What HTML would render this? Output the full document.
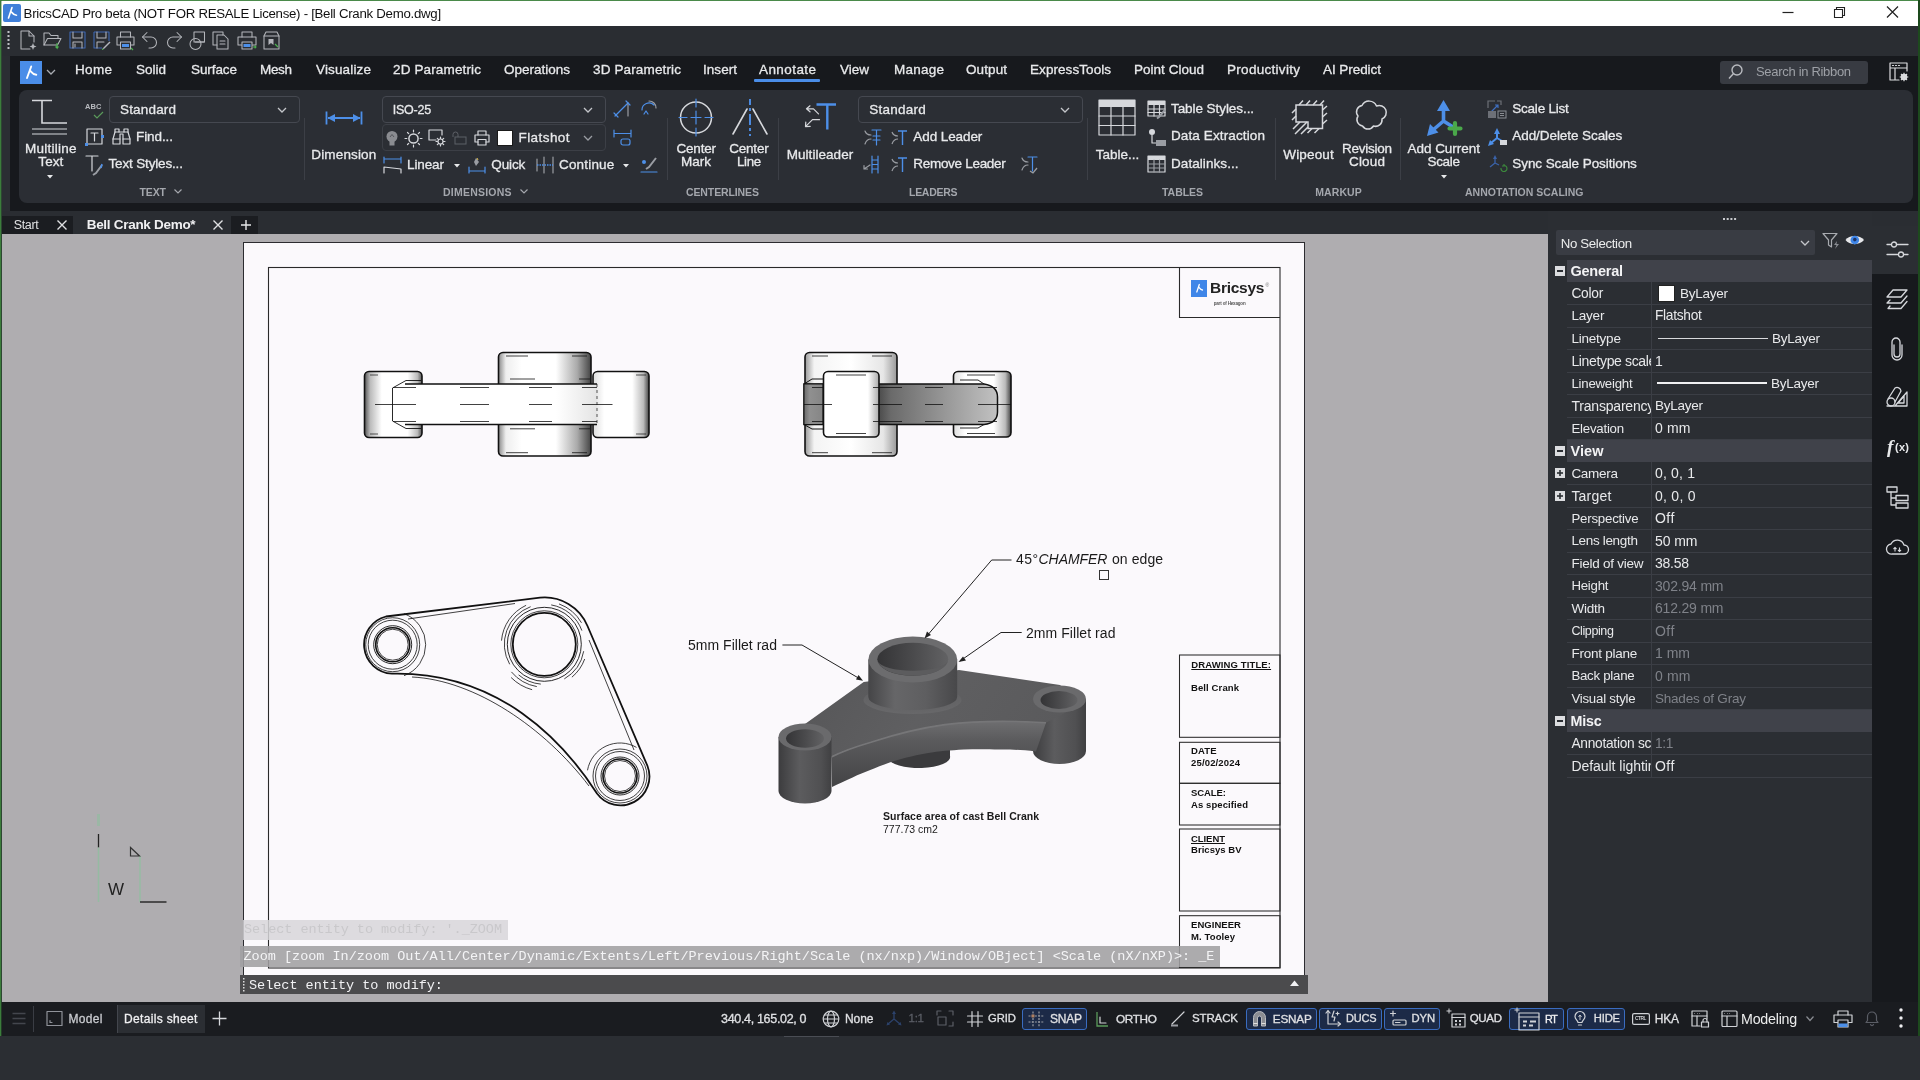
<!DOCTYPE html>
<html lang="en">
<head>
<meta charset="utf-8">
<title>BricsCAD Pro beta (NOT FOR RESALE License) - [Bell Crank Demo.dwg]</title>
<style>
*{box-sizing:border-box;margin:0;padding:0}
html,body{width:1920px;height:1080px;overflow:hidden;background:#2b2e33;font-family:"Liberation Sans",sans-serif;color:#e4e5e7}
.abs,.abs>*{position:absolute}
#root{position:absolute;left:0;top:0;width:1920px;height:1080px;overflow:hidden;background:#2b2e33;will-change:transform;-webkit-font-smoothing:antialiased}
#root div,#root span,#root svg{position:absolute;white-space:nowrap}
.hv{-webkit-text-stroke:0.3px currentColor}
.t{color:#e6e7e9;font-size:14px;line-height:16px;letter-spacing:-0.1px}
svg{overflow:visible}
/* title bar */
#titlebar{left:0;top:0;width:1920px;height:26px;background:#fff}
#title{left:23px;top:5px;font-size:13.3px;line-height:16px;color:#111;letter-spacing:-0.05px}
/* toolbar */
#qat{left:0;top:26px;width:1920px;height:30px;background:#2a2d32}
/* tabs row */
#tabrow{left:10px;top:56px;width:1910px;height:155px;background:#17191d}
.tab{top:61px;font-size:14px;line-height:16px;color:#e1e2e4;letter-spacing:-0.05px}
/* ribbon */
#ribbon{left:19px;top:90px;width:1894px;height:113px;background:#2b2e34;border-radius:8px}
.sep{width:1px;background:#3b3e45;top:121px;height:59px}
.plabel{top:185px;font-size:10.5px;line-height:12px;font-weight:bold;color:#a9acb2;letter-spacing:0.1px}
.dd{border:1px solid #464a52;border-radius:3px;background:#2b2e34}
/* doc tabs */
#doctabs{left:0;top:211px;width:1920px;height:23px;background:#2a2d32}
/* canvas */
#canvas{left:2px;top:234px;width:1546px;height:768px;background:#afadb0;overflow:hidden}
#paper{left:243px;top:242px;width:1062px;height:752px;background:#fbf9fc;border:1.3px solid #2c2c30}
/* props */
#props{left:1548px;top:211px;width:324px;height:791px;background:#2b2e33}
#strip{left:1872px;top:226px;width:48px;height:776px;background:#17191d}
.prow{left:1567px;width:305px;height:22.5px;border-bottom:1px solid #3c3f46}
.pl{font-size:14px;line-height:16px;color:#e6e7e9;letter-spacing:-0.35px}
.pv{font-size:14px;line-height:16px;color:#e6e7e9;letter-spacing:-0.2px}
.dim{color:#7d8087}
/* status */
#status{left:0;top:1002px;width:1920px;height:33.5px;background:#1a1c20}
.st{top:1011px;font-size:12.5px;line-height:15px;color:#dcdde0;letter-spacing:-0.1px}
.tog{top:1006px;height:25px;border:1px solid #3b6fc4;border-radius:3px;background:#1f2a40}

</style>
</head>
<body>
<div id="root">
<div id="titlebar"></div>
<div id="qat"></div>
<div id="tabrow"></div>
<div id="ribbon"></div>
<div id="doctabs"></div>
<div id="canvas"></div>
<div id="paper"></div>
<div id="props"></div>
<div id="strip"></div>
<div id="status"></div>
<div style="left:0px;top:0px;width:1920px;height:1.3px;background:#4a8a4a;"></div>
<svg style="left:3px;top:4px;" width="18" height="18" viewBox="0 0 18 18"><rect x="0" y="0" width="18" height="18" rx="2" fill="#3f7fd9"/><path d="M9 3.500 L5.500 14 M8 7.500 C9.500 9 10.500 11.300 13.500 11.300" stroke="#fff" stroke-width="1.600" fill="none" stroke-linecap="round"/></svg>
<div style="left:23.6px;top:7.4px;font-size:13.25px;line-height:13.25px;color:#111;letter-spacing:-0.28px;">BricsCAD Pro beta (NOT FOR RESALE License) - [Bell Crank Demo.dwg]</div>
<svg style="left:1780px;top:4px;" width="130" height="16" viewBox="0 0 130 16"><path d="M2.5 8.5 H13.5" stroke="#222" stroke-width="1.2"/><path d="M54.5 5.5 h8 v8 h-8 z M56.5 5.5 v-2 h8 v8 h-2" stroke="#222" stroke-width="1.1" fill="none"/><path d="M107 2.5 L118 13.5 M118 2.5 L107 13.5" stroke="#222" stroke-width="1.2"/></svg>
<svg style="left:7px;top:31px;" width="3" height="18" viewBox="0 0 3 18"><rect x="0.5" y="0" width="2" height="2" fill="#bfc1c5"/><rect x="0.5" y="4" width="2" height="2" fill="#bfc1c5"/><rect x="0.5" y="8" width="2" height="2" fill="#bfc1c5"/><rect x="0.5" y="12" width="2" height="2" fill="#bfc1c5"/><rect x="0.5" y="16" width="2" height="2" fill="#bfc1c5"/></svg>
<svg style="left:20px;top:30px;" width="17" height="20" viewBox="0 0 17 20"><path d="M1 1 h8 l5 5 v6 M1 1 v18 h9" stroke="#b4b6bb" stroke-width="1.05" fill="none" stroke-linejoin="round" stroke-linecap="round"/><path d="M9 1 v5 h5" stroke="#b4b6bb" stroke-width="1.05" fill="none" stroke-linejoin="round" stroke-linecap="round"/><path d="M13 13 l1 2.5 l2.5 1 l-2.5 1 l-1 2.5 l-1 -2.5 l-2.5 -1 l2.5 -1 z" fill="#b4b6bb"/></svg>
<svg style="left:43px;top:31px;" width="19" height="19" viewBox="0 0 19 19"><path d="M1 14 v-12 h5 l2 2.5 h7 v3" stroke="#b4b6bb" stroke-width="1.05" fill="none" stroke-linejoin="round" stroke-linecap="round"/><path d="M1 14 l3.5 -6.500 h13.5 l-3.5 6.500 z" stroke="#b4b6bb" stroke-width="1.05" fill="none" stroke-linejoin="round" stroke-linecap="round"/><path d="M14 12 v5 l-1.5 -1.5 M14 17 l1.500 -1.500" stroke="#4caf50" stroke-width="1.2" fill="none"/></svg>
<svg style="left:69px;top:31px;" width="17" height="18" viewBox="0 0 17 18"><path d="M1 1 h15 v16 h-15 z" stroke="#3f68b3" stroke-width="1.1" fill="none" stroke-linejoin="round"/><path d="M4 1 v6 h9 v-6 M4 17 v-6 h9 v6" stroke="#b4b6bb" stroke-width="1.05" fill="none" stroke-linejoin="round" stroke-linecap="round"/><path d="M6 13 v3" stroke="#b4b6bb" stroke-width="1.05" fill="none" stroke-linejoin="round" stroke-linecap="round"/></svg>
<svg style="left:93px;top:31px;" width="18" height="19" viewBox="0 0 18 19"><path d="M1 1 h15 v9 M1 1 v16 h8" stroke="#3f68b3" stroke-width="1.1" fill="none" stroke-linejoin="round"/><path d="M4 1 v6 h9 v-6 M4 17 v-6 h7" stroke="#b4b6bb" stroke-width="1.05" fill="none" stroke-linejoin="round" stroke-linecap="round"/><path d="M16.500 10.500 l-6 6 l-1.500 2 l2.500 -1 l6 -6 z" fill="#b4b6bb"/><path d="M9 18.500 l1.500 -0.500" stroke="#4caf50" stroke-width="1.200"/></svg>
<svg style="left:116px;top:31px;" width="19" height="19" viewBox="0 0 19 19"><path d="M4.500 6 v-5 h10 v5" stroke="#b4b6bb" stroke-width="1.05" fill="none" stroke-linejoin="round" stroke-linecap="round"/><path d="M4 14 h-3 v-8 h17 v8 h-3" stroke="#b4b6bb" stroke-width="1.05" fill="none" stroke-linejoin="round" stroke-linecap="round"/><path d="M4.500 11 h10 v7 h-10 z" stroke="#b4b6bb" stroke-width="1.05" fill="none" stroke-linejoin="round" stroke-linecap="round"/><rect x="6" y="13" width="7" height="3" fill="#4d8fe8"/><path d="M15 17 l2 2" stroke="#4caf50" stroke-width="1.200"/></svg>
<svg style="left:141px;top:31px;" width="18" height="18" viewBox="0 0 18 18"><path d="M6 1.500 L1.500 6 L6 10.500" stroke="#b4b6bb" stroke-width="1.05" fill="none" stroke-linejoin="round" stroke-linecap="round"/><path d="M1.500 6 H10 a5.500 5.500 0 0 1 0 11 H8" stroke="#b4b6bb" stroke-width="1.05" fill="none" stroke-linejoin="round" stroke-linecap="round"/></svg>
<svg style="left:165px;top:31px;" width="18" height="18" viewBox="0 0 18 18"><path d="M12 1.500 L16.500 6 L12 10.500" stroke="#b4b6bb" stroke-width="1.05" fill="none" stroke-linejoin="round" stroke-linecap="round"/><path d="M16.500 6 H8 a5.500 5.500 0 0 0 0 11 H10" stroke="#b4b6bb" stroke-width="1.05" fill="none" stroke-linejoin="round" stroke-linecap="round"/></svg>
<svg style="left:189px;top:31px;" width="17" height="19" viewBox="0 0 17 19"><rect x="5" y="1" width="10.500" height="10" stroke="#b4b6bb" stroke-width="1.05" fill="none" stroke-linejoin="round" stroke-linecap="round"/><circle cx="6.500" cy="13" r="5.500" stroke="#b4b6bb" stroke-width="1.05" fill="none" stroke-linejoin="round" stroke-linecap="round"/><path d="M6.500 11 H15" stroke="#b4b6bb" stroke-width="1.05" fill="none" stroke-linejoin="round" stroke-linecap="round"/></svg>
<svg style="left:212px;top:31px;" width="17" height="19" viewBox="0 0 17 19"><path d="M11 4 v-3 h-10 v13 h4" stroke="#b4b6bb" stroke-width="1.05" fill="none" stroke-linejoin="round" stroke-linecap="round"/><path d="M5 4 h7 l4 4 v10 h-11 z" stroke="#b4b6bb" stroke-width="1.05" fill="none" stroke-linejoin="round" stroke-linecap="round"/><path d="M8 10 h5 M8 13 h5" stroke="#b4b6bb" stroke-width="1.05" fill="none" stroke-linejoin="round" stroke-linecap="round"/></svg>
<svg style="left:237px;top:31px;" width="20" height="19" viewBox="0 0 20 19"><path d="M5 6 v-5 h10 v5" stroke="#b4b6bb" stroke-width="1.05" fill="none" stroke-linejoin="round" stroke-linecap="round"/><path d="M4.500 14 h-3.500 v-8 h18 v8 h-3.500" stroke="#b4b6bb" stroke-width="1.05" fill="none" stroke-linejoin="round" stroke-linecap="round"/><path d="M5 11 h10 v7 h-10 z" stroke="#b4b6bb" stroke-width="1.05" fill="none" stroke-linejoin="round" stroke-linecap="round"/><rect x="6.500" y="13" width="7" height="3" fill="#4d8fe8"/><path d="M16 16 h3 m-1.300 -1.300 l1.300 1.300 l-1.300 1.300" stroke="#4caf50" stroke-width="1.100" fill="none"/></svg>
<svg style="left:263px;top:31px;" width="17" height="19" viewBox="0 0 17 19"><path d="M1 5 l2 -4 h11 l2 4 v13 h-15 z" stroke="#b4b6bb" stroke-width="1.05" fill="none" stroke-linejoin="round" stroke-linecap="round"/><path d="M1 5 h15" stroke="#b4b6bb" stroke-width="1.05" fill="none" stroke-linejoin="round" stroke-linecap="round"/><path d="M5.500 8 h5 v6 l-2.500 -2 l-2.500 2 z" fill="#b4b6bb"/><path d="M12 13 l3 3" stroke="#4caf50" stroke-width="1.200"/></svg>
<div style="left:20px;top:61px;width:22px;height:23px;background:#4a8de8;"></div>
<svg style="left:20px;top:61px;" width="22" height="23" viewBox="0 0 22 23"><path d="M11.200 5.500 L7 17 M10 9.500 C11.500 11 13 13.800 16.300 13.800" stroke="#fff" stroke-width="1.900" fill="none" stroke-linecap="round"/></svg>
<svg style="left:46px;top:69px;" width="10" height="7" viewBox="0 0 10 7"><path d="M1 1 L5 5 L9 1" stroke="#a9acb2" stroke-width="1.300" fill="none"/></svg>
<div class="hv" style="left:75.0px;top:62.9px;font-size:13.5px;line-height:13.5px;color:#e8e9eb;letter-spacing:0.33px;">Home</div>
<div class="hv" style="left:136.0px;top:62.9px;font-size:13.5px;line-height:13.5px;color:#e8e9eb;letter-spacing:-0.01px;">Solid</div>
<div class="hv" style="left:191.0px;top:62.9px;font-size:13.5px;line-height:13.5px;color:#e8e9eb;letter-spacing:-0.09px;">Surface</div>
<div class="hv" style="left:260.0px;top:62.9px;font-size:13.5px;line-height:13.5px;color:#e8e9eb;letter-spacing:-0.34px;">Mesh</div>
<div class="hv" style="left:316.0px;top:62.9px;font-size:13.5px;line-height:13.5px;color:#e8e9eb;letter-spacing:0.15px;">Visualize</div>
<div class="hv" style="left:393.0px;top:62.9px;font-size:13.5px;line-height:13.5px;color:#e8e9eb;letter-spacing:0.14px;">2D Parametric</div>
<div class="hv" style="left:504.0px;top:62.9px;font-size:13.5px;line-height:13.5px;color:#e8e9eb;">Operations</div>
<div class="hv" style="left:593.0px;top:62.9px;font-size:13.5px;line-height:13.5px;color:#e8e9eb;letter-spacing:0.14px;">3D Parametric</div>
<div class="hv" style="left:703.0px;top:62.9px;font-size:13.5px;line-height:13.5px;color:#e8e9eb;letter-spacing:0.05px;">Insert</div>
<div class="hv" style="left:759.0px;top:62.9px;font-size:13.5px;line-height:13.5px;color:#e8e9eb;letter-spacing:0.42px;">Annotate</div>
<div class="hv" style="left:840.0px;top:62.9px;font-size:13.5px;line-height:13.5px;color:#e8e9eb;letter-spacing:-0.01px;">View</div>
<div class="hv" style="left:894.0px;top:62.9px;font-size:13.5px;line-height:13.5px;color:#e8e9eb;letter-spacing:0.24px;">Manage</div>
<div class="hv" style="left:966.0px;top:62.9px;font-size:13.5px;line-height:13.5px;color:#e8e9eb;letter-spacing:0.10px;">Output</div>
<div class="hv" style="left:1030.0px;top:62.9px;font-size:13.5px;line-height:13.5px;color:#e8e9eb;letter-spacing:0.07px;">ExpressTools</div>
<div class="hv" style="left:1134.0px;top:62.9px;font-size:13.5px;line-height:13.5px;color:#e8e9eb;letter-spacing:0.02px;">Point Cloud</div>
<div class="hv" style="left:1227.0px;top:62.9px;font-size:13.5px;line-height:13.5px;color:#e8e9eb;letter-spacing:0.29px;">Productivity</div>
<div class="hv" style="left:1323.0px;top:62.9px;font-size:13.5px;line-height:13.5px;color:#e8e9eb;letter-spacing:-0.06px;">AI Predict</div>
<div style="left:754px;top:79px;width:66px;height:3px;background:#4a8de8;border-radius:1px;"></div>
<div style="left:1720px;top:61px;width:148px;height:23px;background:#383b42;border-radius:3px;"></div>
<svg style="left:1727px;top:63px;" width="17" height="18" viewBox="0 0 17 18"><circle cx="10" cy="7" r="5" stroke="#b9bbc0" stroke-width="1.400" fill="none"/><path d="M6.500 10.500 L2 15.500" stroke="#b9bbc0" stroke-width="1.400"/></svg>
<div style="left:1756.0px;top:64.6px;font-size:13px;line-height:13px;color:#9da0a6;letter-spacing:-0.31px;">Search in Ribbon</div>
<svg style="left:1889px;top:62px;" width="20" height="20" viewBox="0 0 20 20"><path d="M1 1 h17 v8 M1 1 v17 h9 M1 6 h17 M6 6 v12" stroke="#dcdde0" stroke-width="1.200" fill="none" stroke-linejoin="round" stroke-linecap="round"/><path d="M3.500 3.500 h1 M6.500 3.500 h1 M9.500 3.500 h1" stroke="#dcdde0" stroke-width="1.200" fill="none" stroke-linejoin="round" stroke-linecap="round"/><circle cx="15" cy="15" r="2.300" stroke="#dcdde0" stroke-width="2" fill="none"/><path d="M15 10.700 v8.600 M10.700 15 h8.600 M12 12 l6 6 M18 12 l-6 6" stroke="#dcdde0" stroke-width="1.200"/></svg>
<div style="left:2px;top:216px;width:71px;height:18px;background:#1b1d21;"></div>
<div style="left:13.7px;top:218.5px;font-size:12.5px;line-height:12.5px;color:#e0e1e3;letter-spacing:-0.35px;">Start</div>
<svg style="left:56px;top:219px;" width="12" height="12" viewBox="0 0 12 12"><path d="M1.500 1.500 L10.500 10.500 M10.500 1.500 L1.500 10.500" stroke="#e0e1e3" stroke-width="1.400"/></svg>
<div style="left:86.7px;top:218.0px;font-size:13.5px;line-height:13.5px;color:#f0f0f2;letter-spacing:-0.29px;font-weight:bold;">Bell Crank Demo*</div>
<svg style="left:211.5px;top:219px;" width="12" height="12" viewBox="0 0 12 12"><path d="M1.500 1.500 L10.500 10.500 M10.500 1.500 L1.500 10.500" stroke="#e0e1e3" stroke-width="1.400"/></svg>
<div style="left:231px;top:216px;width:27px;height:18px;background:#1b1d21;"></div>
<svg style="left:240px;top:219px;" width="12" height="12" viewBox="0 0 12 12"><path d="M6 1 V11 M1 6 H11" stroke="#e6e7e9" stroke-width="1.400"/></svg>
<svg style="left:31px;top:99px;" width="38" height="37" viewBox="0 0 38 37"><path d="M1 1.500 H21 M11 1.500 V24 H36" stroke="#d6d8dc" stroke-width="1.600" fill="none"/><path d="M1 30 H36 M1 35 H36" stroke="#d6d8dc" stroke-width="1.200"/></svg>
<div class="hv" style="left:25.0px;top:142.4px;font-size:13.5px;line-height:13.5px;color:#e8e9eb;letter-spacing:0.25px;">Multiline</div>
<div class="hv" style="left:38.3px;top:154.7px;font-size:13.5px;line-height:13.5px;color:#e8e9eb;letter-spacing:0.08px;">Text</div>
<svg style="left:47px;top:174.5px;" width="6" height="4" viewBox="0 0 6 4"><path d="M0 0 H6 L3 3.500 Z" fill="#e8e9eb"/></svg>
<div style="left:85.0px;top:103.3px;font-size:7.5px;line-height:7.5px;color:#b8babf;letter-spacing:0.13px;font-weight:bold;">ABC</div>
<svg style="left:93px;top:111px;" width="11" height="8" viewBox="0 0 11 8"><path d="M1 4 L4 7 L10 1" stroke="#5a9a5a" stroke-width="1.200" fill="none"/></svg>
<div style="left:109px;top:96px;width:191px;height:27px;border:1px solid #454850;border-radius:4px;"></div>
<div class="hv" style="left:120.0px;top:103.2px;font-size:13.5px;line-height:13.5px;color:#e8e9eb;letter-spacing:0.17px;">Standard</div>
<svg style="left:277px;top:106.5px;" width="10" height="7" viewBox="0 0 10 7"><path d="M1 1 L5 5 L9 1" stroke="#c4c6ca" stroke-width="1.300" fill="none"/></svg>
<svg style="left:85px;top:128px;" width="20" height="19" viewBox="0 0 20 19"><rect x="2" y="1" width="15" height="15" stroke="#d6d8dc" stroke-width="1.2" fill="none" stroke-linejoin="round" stroke-linecap="round"/><path d="M6 5 H13 M9.500 5 V13" stroke="#d6d8dc" stroke-width="1.2" fill="none" stroke-linejoin="round" stroke-linecap="round"/><rect x="0" y="15" width="3" height="3" fill="#4d8fe8"/><rect x="16" y="7" width="3" height="3" fill="#4d8fe8"/></svg>
<svg style="left:112px;top:128px;" width="20" height="18" viewBox="0 0 20 18"><path d="M3 4 V1 H7 V4 M12 4 V1 H16 V4" stroke="#d6d8dc" stroke-width="1.2" fill="none" stroke-linejoin="round" stroke-linecap="round"/><path d="M3 4 L1 11 V16 H8 V6 H11 V16 H18 V11 L16 4 Z" stroke="#d6d8dc" stroke-width="1.2" fill="none" stroke-linejoin="round" stroke-linecap="round"/><path d="M1 11 H8 M11 11 H18" stroke="#d6d8dc" stroke-width="1.2" fill="none" stroke-linejoin="round" stroke-linecap="round"/></svg>
<div class="hv" style="left:136.0px;top:130.4px;font-size:13.5px;line-height:13.5px;color:#e8e9eb;letter-spacing:-0.09px;">Find...</div>
<svg style="left:85px;top:155px;" width="20" height="22" viewBox="0 0 20 22"><path d="M1 1 H13 M7 1 V16" stroke="#d6d8dc" stroke-width="1.2" fill="none" stroke-linejoin="round" stroke-linecap="round"/><path d="M17 10 L11 18 L8 20" stroke="#9a9da3" stroke-width="2" fill="none"/><path d="M17 9 L16 13" stroke="#4d8fe8" stroke-width="1.500"/></svg>
<div class="hv" style="left:108.5px;top:157.4px;font-size:13.5px;line-height:13.5px;color:#e8e9eb;letter-spacing:-0.16px;">Text Styles...</div>
<div style="left:139.5px;top:187.1px;font-size:10.5px;line-height:10.5px;color:#a4a7ad;letter-spacing:-0.11px;font-weight:bold;">TEXT</div>
<svg style="left:174.0px;top:189px;" width="8" height="6" viewBox="0 0 8 6"><path d="M0.500 0.500 L4 4 L7.500 0.500" stroke="#a4a7ad" stroke-width="1.200" fill="none"/></svg>
<div style="left:304px;top:118px;width:1px;height:62px;background:#3c3f46;"></div>
<svg style="left:325px;top:111px;" width="38" height="14" viewBox="0 0 38 14"><path d="M1.500 0.500 V13.500 M36.500 0.500 V13.500 M3 7 H35" stroke="#4d8fe8" stroke-width="1.800" fill="none"/><path d="M2.500 7 L10 3 V11 Z M35.500 7 L28 3 V11 Z" fill="#4d8fe8"/></svg>
<div class="hv" style="left:311.3px;top:148.4px;font-size:13.5px;line-height:13.5px;color:#e8e9eb;letter-spacing:0.15px;">Dimension</div>
<div style="left:382px;top:96px;width:224px;height:27px;border:1px solid #454850;border-radius:4px;"></div>
<div class="hv" style="left:392.7px;top:103.7px;font-size:12.5px;line-height:12.5px;color:#e8e9eb;letter-spacing:-0.22px;">ISO-25</div>
<svg style="left:583px;top:106.5px;" width="10" height="7" viewBox="0 0 10 7"><path d="M1 1 L5 5 L9 1" stroke="#c4c6ca" stroke-width="1.300" fill="none"/></svg>
<div style="left:382px;top:124px;width:224px;height:27px;border:1px solid #3c3f46;border-radius:4px;"></div>
<svg style="left:385px;top:130px;" width="14" height="17" viewBox="0 0 14 17"><circle cx="7" cy="6.500" r="5.500" fill="#8a8c91"/><rect x="4.500" y="11" width="5" height="4.500" fill="#8a8c91"/><path d="M5 7 L7 4.500 L9 7" stroke="#55575c" fill="none"/></svg>
<svg style="left:404px;top:129px;" width="19" height="19" viewBox="0 0 19 19"><circle cx="9.500" cy="9.500" r="4.600" stroke="#d6d8dc" stroke-width="1.500" fill="none"/><path d="M9.500 1 V2.800 M9.500 16.200 V18 M1 9.500 H2.800 M16.200 9.500 H18 M3.500 3.500 L4.700 4.700 M14.300 14.300 L15.500 15.500 M3.500 15.500 L4.700 14.300 M14.300 4.700 L15.500 3.500" stroke="#d6d8dc" stroke-width="1.2" fill="none" stroke-linejoin="round" stroke-linecap="round"/></svg>
<svg style="left:428px;top:129px;" width="18" height="18" viewBox="0 0 18 18"><path d="M8 11 H1 V1 H14 V6" stroke="#d6d8dc" stroke-width="1.2" fill="none" stroke-linejoin="round" stroke-linecap="round"/><circle cx="12.500" cy="12.500" r="2.500" stroke="#d6d8dc" stroke-width="1.2" fill="none" stroke-linejoin="round" stroke-linecap="round"/><path d="M12.500 8 V9.500 M12.500 15.500 V17 M8 12.500 H9.500 M15.500 12.500 H17 M9.300 9.300 L10.400 10.400 M14.600 14.600 L15.700 15.700 M9.300 15.700 L10.400 14.600 M14.600 10.400 L15.700 9.300" stroke="#d6d8dc" stroke-width="1.2" fill="none" stroke-linejoin="round" stroke-linecap="round"/></svg>
<svg style="left:451px;top:131px;" width="16" height="14" viewBox="0 0 16 14"><rect x="4" y="6" width="11" height="7" stroke="#5d6067" fill="none"/><path d="M2 6 V3.500 A2.500 2.500 0 0 1 7 3.500 V6" stroke="#5d6067" fill="none"/></svg>
<svg style="left:474px;top:130px;" width="16" height="16" viewBox="0 0 16 16"><path d="M4 5 V1 H12 V5" stroke="#d6d8dc" stroke-width="1.2" fill="none" stroke-linejoin="round" stroke-linecap="round"/><path d="M4 12 H1 V5 H15 V12 H12" stroke="#d6d8dc" stroke-width="1.2" fill="none" stroke-linejoin="round" stroke-linecap="round"/><path d="M4 9.500 H12 V15 H4 Z" stroke="#d6d8dc" stroke-width="1.2" fill="none" stroke-linejoin="round" stroke-linecap="round"/></svg>
<div style="left:497px;top:130px;width:16px;height:16px;background:#ffffff;border:1px solid #1a1a1a;"></div>
<div class="hv" style="left:518.5px;top:131.2px;font-size:13.5px;line-height:13.5px;color:#e8e9eb;letter-spacing:0.43px;">Flatshot</div>
<svg style="left:583px;top:135px;" width="10" height="7" viewBox="0 0 10 7"><path d="M1 1 L5 5 L9 1" stroke="#9a9da3" stroke-width="1.300" fill="none"/></svg>
<svg style="left:613px;top:100px;" width="19" height="19" viewBox="0 0 19 19"><path d="M2 16 L15 3" stroke="#4d8fe8" stroke-width="1.2" fill="none" stroke-linejoin="round" stroke-linecap="round"/><path d="M15 3 V16" stroke="#9a9da3" stroke-width="1.2" fill="none" stroke-linejoin="round" stroke-linecap="round"/><path d="M1 13 L5 17 M13 1 L17 5" stroke="#4d8fe8" stroke-width="1.2" fill="none" stroke-linejoin="round" stroke-linecap="round"/></svg>
<svg style="left:613px;top:129px;" width="19" height="18" viewBox="0 0 19 18"><path d="M1 1 V8 M18 1 V8 M1 4.500 H18" stroke="#4d8fe8" stroke-width="1.2" fill="none" stroke-linejoin="round" stroke-linecap="round"/><rect x="8" y="10" width="9" height="6" rx="2" stroke="#4d8fe8" stroke-width="1.2" fill="none" stroke-linejoin="round" stroke-linecap="round"/></svg>
<svg style="left:640px;top:100px;" width="18" height="19" viewBox="0 0 18 19"><path d="M2 10 A7 7 0 0 1 14 5" stroke="#4d8fe8" stroke-width="1.2" fill="none" stroke-linejoin="round" stroke-linecap="round"/><path d="M9 1 C13 1 16 4 16 8" stroke="#9a9da3" stroke-width="1.2" fill="none" stroke-linejoin="round" stroke-linecap="round"/><path d="M4 14 l2 -3 l2 3" stroke="#4d8fe8" stroke-width="1.2" fill="none" stroke-linejoin="round" stroke-linecap="round"/></svg>
<svg style="left:640px;top:156px;" width="18" height="18" viewBox="0 0 18 18"><path d="M1 16 H17" stroke="#4d8fe8" stroke-width="1.2" fill="none" stroke-linejoin="round" stroke-linecap="round"/><path d="M16 2 L9 11 L6 13" stroke="#9a9da3" stroke-width="2" fill="none"/><circle cx="4" cy="6" r="2" fill="#4d8fe8"/></svg>
<svg style="left:383px;top:156px;" width="20" height="18" viewBox="0 0 20 18"><path d="M1 1 V7 M18 1 V7 M1 3 H18" stroke="#4d8fe8" stroke-width="1.2" fill="none" stroke-linejoin="round" stroke-linecap="round"/><path d="M1 17 V11 L18 13 V17" stroke="#d6d8dc" stroke-width="1.2" fill="none" stroke-linejoin="round" stroke-linecap="round"/></svg>
<div class="hv" style="left:407.0px;top:158.4px;font-size:13.5px;line-height:13.5px;color:#e8e9eb;letter-spacing:-0.11px;">Linear</div>
<svg style="left:453.5px;top:164.0px;" width="6" height="4" viewBox="0 0 6 4"><path d="M0 0 H6 L3 3.500 Z" fill="#e8e9eb"/></svg>
<svg style="left:468px;top:157px;" width="19" height="17" viewBox="0 0 19 17"><path d="M1 10 V16 M17 10 V16 M1 14 H17" stroke="#4d8fe8" stroke-width="1.2" fill="none" stroke-linejoin="round" stroke-linecap="round"/><path d="M8 1 L11 5 L8 9 L6 5 Z" fill="#9a9da3"/><path d="M9 1 l1 2" stroke="#e0c050"/></svg>
<div class="hv" style="left:491.3px;top:158.4px;font-size:13.5px;line-height:13.5px;color:#e8e9eb;letter-spacing:-0.13px;">Quick</div>
<svg style="left:536px;top:156px;" width="18" height="18" viewBox="0 0 18 18"><path d="M1 3 V15 M8 1 V17 M17 1 V17" stroke="#9a9da3" stroke-width="1.2" fill="none" stroke-linejoin="round" stroke-linecap="round"/><path d="M1 9 H17" stroke="#4d8fe8" stroke-width="1.400" stroke-dasharray="1.500 1"/></svg>
<div class="hv" style="left:559.0px;top:158.4px;font-size:13.5px;line-height:13.5px;color:#e8e9eb;letter-spacing:0.18px;">Continue</div>
<svg style="left:623px;top:164.0px;" width="6" height="4" viewBox="0 0 6 4"><path d="M0 0 H6 L3 3.500 Z" fill="#e8e9eb"/></svg>
<div style="left:443.0px;top:187.1px;font-size:10.5px;line-height:10.5px;color:#a4a7ad;letter-spacing:0.22px;font-weight:bold;">DIMENSIONS</div>
<svg style="left:519.5px;top:189px;" width="8" height="6" viewBox="0 0 8 6"><path d="M0.500 0.500 L4 4 L7.500 0.500" stroke="#a4a7ad" stroke-width="1.200" fill="none"/></svg>
<div style="left:667px;top:118px;width:1px;height:62px;background:#3c3f46;"></div>
<svg style="left:678px;top:99px;" width="36" height="37" viewBox="0 0 36 37"><circle cx="18" cy="18.500" r="15.500" stroke="#d6d8dc" stroke-width="1.500" fill="none"/><path d="M18 0 V8 M18 12 V25 M18 29 V37 M1 18.500 H9 M13 18.500 H23 M27 18.500 H35" stroke="#4d8fe8" stroke-width="1.2" fill="none" stroke-linejoin="round" stroke-linecap="round"/></svg>
<div class="hv" style="left:676.5px;top:142.4px;font-size:13.5px;line-height:13.5px;color:#e8e9eb;letter-spacing:-0.20px;">Center</div>
<div class="hv" style="left:681.0px;top:154.7px;font-size:13.5px;line-height:13.5px;color:#e8e9eb;">Mark</div>
<svg style="left:731px;top:99px;" width="38" height="37" viewBox="0 0 38 37"><path d="M16 10 L2 35 M22 10 L36 35" stroke="#d6d8dc" stroke-width="1.600" fill="none" stroke-linecap="round"/><path d="M19 0 V6 M19 9 V12 M19 15 V26 M19 29 V32 M19 35 V37" stroke="#4d8fe8" stroke-width="1.900" fill="none"/></svg>
<div class="hv" style="left:729.2px;top:142.4px;font-size:13.5px;line-height:13.5px;color:#e8e9eb;letter-spacing:-0.20px;">Center</div>
<div class="hv" style="left:737.0px;top:154.8px;font-size:13.25px;line-height:13.25px;color:#e8e9eb;letter-spacing:-0.32px;">Line</div>
<div style="left:686.0px;top:187.1px;font-size:10.5px;line-height:10.5px;color:#a4a7ad;letter-spacing:-0.11px;font-weight:bold;">CENTERLINES</div>
<div style="left:778px;top:118px;width:1px;height:62px;background:#3c3f46;"></div>
<svg style="left:804px;top:103px;" width="33" height="28" viewBox="0 0 33 28"><path d="M12.500 1.500 H32 M23.300 1.500 V26.500" stroke="#4d8fe8" stroke-width="2.400" fill="none"/><path d="M14.500 10.800 L9.500 5.800 H3 M6 2.800 L2.500 5.800 L6 8.800" stroke="#d6d8dc" stroke-width="1.2" fill="none" stroke-linejoin="round" stroke-linecap="round"/><path d="M15.500 16.700 H8.500 L2 23.200 M1.800 19 L1.500 23.600 L6.200 23.400" stroke="#d6d8dc" stroke-width="1.2" fill="none" stroke-linejoin="round" stroke-linecap="round"/></svg>
<div class="hv" style="left:786.7px;top:148.4px;font-size:13.5px;line-height:13.5px;color:#e8e9eb;letter-spacing:0.05px;">Multileader</div>
<div style="left:858px;top:96px;width:225px;height:27px;border:1px solid #454850;border-radius:4px;"></div>
<div class="hv" style="left:869.3px;top:103.2px;font-size:13.5px;line-height:13.5px;color:#e8e9eb;letter-spacing:0.24px;">Standard</div>
<svg style="left:1060px;top:106.5px;" width="10" height="7" viewBox="0 0 10 7"><path d="M1 1 L5 5 L9 1" stroke="#c4c6ca" stroke-width="1.300" fill="none"/></svg>
<svg style="left:863px;top:128px;" width="19" height="19" viewBox="0 0 19 19"><path d="M9 2 H18 M13.500 2 V17 M10 8 H17 M10 12 H17" stroke="#4d8fe8" stroke-width="1.2" fill="none" stroke-linejoin="round" stroke-linecap="round"/><path d="M8 7 C5 7 3 6 2 3 M8 11 C5 11 3 13 2 16" stroke="#9a9da3" stroke-width="1.2" fill="none" stroke-linejoin="round" stroke-linecap="round"/></svg>
<svg style="left:890px;top:129px;" width="18" height="18" viewBox="0 0 18 18"><path d="M8 2 H17 M12.500 2 V16" stroke="#4d8fe8" stroke-width="1.400" fill="none"/><path d="M8 7 C5 7 3 6 2 3 M8 10 C5 10 3 12 2 15" stroke="#9a9da3" stroke-width="1.200" fill="none"/></svg>
<div class="hv" style="left:913.3px;top:130.4px;font-size:13.5px;line-height:13.5px;color:#e8e9eb;letter-spacing:-0.09px;">Add Leader</div>
<svg style="left:863px;top:155px;" width="19" height="19" viewBox="0 0 19 19"><path d="M9 1 V18 M15 1 V18 M9 5 H15 M9 9.500 H15 M9 14 H15" stroke="#4d8fe8" stroke-width="1.2" fill="none" stroke-linejoin="round" stroke-linecap="round"/><path d="M7 10 L1 14 M1 10.500 V14 H4.500" stroke="#9a9da3" stroke-width="1.2" fill="none" stroke-linejoin="round" stroke-linecap="round"/></svg>
<svg style="left:890px;top:156px;" width="18" height="18" viewBox="0 0 18 18"><path d="M8 2 H17 M12.500 2 V16" stroke="#4d8fe8" stroke-width="1.400" fill="none"/><path d="M8 7 C5 7 3 6 2 3 M8 10 C5 10 3 12 2 15" stroke="#9a9da3" stroke-width="1.200" fill="none"/></svg>
<div class="hv" style="left:913.3px;top:157.4px;font-size:13.5px;line-height:13.5px;color:#e8e9eb;letter-spacing:-0.30px;">Remove Leader</div>
<svg style="left:1020px;top:155px;" width="18" height="19" viewBox="0 0 18 19"><path d="M8 2 H17 M12.500 2 V16" stroke="#4d8fe8" stroke-width="1.2" fill="none" stroke-linejoin="round" stroke-linecap="round"/><path d="M8 7 C5 7 3 6 2 3 M8 10 C5 10 3 12 2 15" stroke="#9a9da3" stroke-width="1.2" fill="none" stroke-linejoin="round" stroke-linecap="round"/><path d="M10 16 l3 2 l4 -5" stroke="#9a9da3" stroke-width="1.300" fill="none"/></svg>
<div style="left:909.0px;top:187.1px;font-size:10.5px;line-height:10.5px;color:#a4a7ad;letter-spacing:-0.28px;font-weight:bold;">LEADERS</div>
<div style="left:1087px;top:118px;width:1px;height:62px;background:#3c3f46;"></div>
<svg style="left:1098px;top:99px;" width="38" height="37" viewBox="0 0 38 37"><rect x="1" y="1" width="36" height="35" stroke="#d6d8dc" stroke-width="1.2" fill="none" stroke-linejoin="round" stroke-linecap="round"/><rect x="1" y="1" width="36" height="7" fill="#d6d8dc"/><path d="M1 17 H37 M1 26.500 H37 M13 8 V36 M25 8 V36" stroke="#d6d8dc" stroke-width="1.2" fill="none" stroke-linejoin="round" stroke-linecap="round"/></svg>
<div class="hv" style="left:1095.7px;top:148.4px;font-size:13.5px;line-height:13.5px;color:#e8e9eb;">Table...</div>
<svg style="left:1147px;top:100px;" width="20" height="19" viewBox="0 0 20 19"><rect x="1" y="1" width="17" height="15" stroke="#d6d8dc" stroke-width="1.2" fill="none" stroke-linejoin="round" stroke-linecap="round"/><rect x="1" y="1" width="17" height="4" fill="#d6d8dc"/><path d="M1 9 H18 M1 12.500 H18 M7 5 V16 M12.500 5 V16" stroke="#d6d8dc" stroke-width="1.2" fill="none" stroke-linejoin="round" stroke-linecap="round"/><path d="M18 10 L12 17 L10 18.500" stroke="#9a9da3" stroke-width="2" fill="none"/></svg>
<div class="hv" style="left:1171.0px;top:102.4px;font-size:13.5px;line-height:13.5px;color:#e8e9eb;letter-spacing:-0.07px;">Table Styles...</div>
<svg style="left:1147px;top:128px;" width="20" height="19" viewBox="0 0 20 19"><circle cx="5" cy="4" r="3" fill="#d6d8dc"/><path d="M5 7 V15 H9" stroke="#d6d8dc" stroke-width="1.2" fill="none" stroke-linejoin="round" stroke-linecap="round"/><rect x="9" y="12" width="10" height="6" fill="#9a9da3"/></svg>
<div class="hv" style="left:1171.0px;top:129.4px;font-size:13.5px;line-height:13.5px;color:#e8e9eb;letter-spacing:0.12px;">Data Extraction</div>
<svg style="left:1147px;top:155px;" width="20" height="19" viewBox="0 0 20 19"><rect x="1" y="1" width="17" height="16" stroke="#d6d8dc" stroke-width="1.2" fill="none" stroke-linejoin="round" stroke-linecap="round"/><rect x="1" y="1" width="17" height="4" fill="#d6d8dc"/><path d="M1 9 H18 M1 13 H18 M7 5 V17 M12.500 5 V17" stroke="#9a9da3" stroke-width="1.2" fill="none" stroke-linejoin="round" stroke-linecap="round"/></svg>
<div class="hv" style="left:1171.0px;top:156.9px;font-size:13.5px;line-height:13.5px;color:#e8e9eb;letter-spacing:0.07px;">Datalinks...</div>
<div style="left:1162.0px;top:187.1px;font-size:10.5px;line-height:10.5px;color:#a4a7ad;letter-spacing:-0.04px;font-weight:bold;">TABLES</div>
<div style="left:1275px;top:118px;width:1px;height:62px;background:#3c3f46;"></div>
<svg style="left:1291px;top:99px;" width="38" height="37" viewBox="0 0 38 37"><path d="M5 6 V23 H17 V29.500 H31.500 V6 Z" stroke="#d6d8dc" stroke-width="1.500" fill="none"/><path d="M8 6 l4 -4.500 M15 6 l4 -4.500 M22 6 l4 -4.500 M29 6 l4 -4.500 M31.500 11 l4.500 -4 M31.500 18 l4.500 -4 M31.500 25 l4.500 -4 M5 10 l-4 4 M5 17 l-4 4 M2 30 l7 -7 M4 35 l12 -12 M10 35 l7 -7 M21 29.500 l-4.500 4.500 M28 29.500 l-4.500 4.500" stroke="#d6d8dc" stroke-width="1.500" fill="none"/></svg>
<div class="hv" style="left:1283.3px;top:148.4px;font-size:13.5px;line-height:13.5px;color:#e8e9eb;letter-spacing:0.16px;">Wipeout</div>
<svg style="left:1349px;top:100px;" width="38" height="32" viewBox="0 0 38 32"><path d="M9 16 A6.500 6.500 0 0 1 13 5.500 A8 8 0 0 1 27.500 6 A7 7 0 0 1 33 19 A6.500 6.500 0 0 1 24.500 26 A6.500 6.500 0 0 1 13.500 26 A6.500 6.500 0 0 1 9 16 Z" stroke="#d6d8dc" stroke-width="1.500" fill="none" stroke-linejoin="round"/></svg>
<div class="hv" style="left:1342.0px;top:142.4px;font-size:13.5px;line-height:13.5px;color:#e8e9eb;letter-spacing:-0.25px;">Revision</div>
<div class="hv" style="left:1349.0px;top:154.7px;font-size:13.5px;line-height:13.5px;color:#e8e9eb;letter-spacing:0.18px;">Cloud</div>
<div style="left:1315.3px;top:187.1px;font-size:10.5px;line-height:10.5px;color:#a4a7ad;letter-spacing:0.08px;font-weight:bold;">MARKUP</div>
<div style="left:1400px;top:118px;width:1px;height:62px;background:#3c3f46;"></div>
<svg style="left:1426px;top:100px;" width="38" height="38" viewBox="0 0 38 38"><path d="M17.500 21 V9 M17.500 21 L7 30 M17.500 21 L27 27" stroke="#4d8fe8" stroke-width="3.600" fill="none"/><path d="M17.500 0 L24 11 H11 Z M1 36 L4 24 L12.500 32.500 Z" fill="#4d8fe8"/><path d="M29 23 V34 M23.500 28.500 H34.500" stroke="#4aa84a" stroke-width="4.200" stroke-linecap="round"/></svg>
<div class="hv" style="left:1407.6px;top:142.4px;font-size:13.5px;line-height:13.5px;color:#e8e9eb;letter-spacing:-0.05px;">Add Current</div>
<div class="hv" style="left:1427.5px;top:154.7px;font-size:13.5px;line-height:13.5px;color:#e8e9eb;letter-spacing:-0.32px;">Scale</div>
<svg style="left:1440.5px;top:174.5px;" width="6" height="4" viewBox="0 0 6 4"><path d="M0 0 H6 L3 3.500 Z" fill="#e8e9eb"/></svg>
<svg style="left:1487px;top:100px;" width="21" height="19" viewBox="0 0 21 19"><path d="M1 8 V1 H8 M10 1 H14 V5" stroke="#6d7077" stroke-width="1.200" fill="none"/><path d="M4 12 L11 5 M8 5 H11 V8" stroke="#3f6fbf" stroke-width="1.200" fill="none"/><rect x="1" y="11" width="8" height="7" fill="#6d7077"/><rect x="11" y="11" width="8" height="7" stroke="#8a8d93" fill="none"/><path d="M13 13.500 H17 M13 15.500 H17" stroke="#8a8d93"/></svg>
<div class="hv" style="left:1512.3px;top:102.4px;font-size:13.5px;line-height:13.5px;color:#e8e9eb;letter-spacing:-0.23px;">Scale List</div>
<svg style="left:1488px;top:128px;" width="20" height="19" viewBox="0 0 20 19"><path d="M9 10 V5 M9 10 L3 15 M9 10 L14 13" stroke="#4d8fe8" stroke-width="2" fill="none"/><path d="M9 0 L12 6 H6 Z M0 18 L2 12 L6 16 Z" fill="#4d8fe8"/><rect x="12" y="12" width="7" height="5" fill="#d6d8dc"/></svg>
<div class="hv" style="left:1512.3px;top:129.4px;font-size:13.5px;line-height:13.5px;color:#e8e9eb;letter-spacing:-0.07px;">Add/Delete Scales</div>
<svg style="left:1488px;top:155px;" width="20" height="19" viewBox="0 0 20 19"><path d="M7 8 V3 M7 8 L2 12 M7 8 L11 10" stroke="#3a62a8" stroke-width="1.300" fill="none"/><path d="M7 0 L9 4 H5 Z" fill="#3a62a8"/><path d="M13 13 a3 3 0 1 0 3 -2.500 M16 9 v2 h-2" stroke="#3c8a3c" stroke-width="1.200" fill="none"/></svg>
<div class="hv" style="left:1512.3px;top:156.9px;font-size:13.5px;line-height:13.5px;color:#e8e9eb;letter-spacing:-0.08px;">Sync Scale Positions</div>
<div style="left:1465.0px;top:187.1px;font-size:10.5px;line-height:10.5px;color:#a4a7ad;letter-spacing:-0.01px;font-weight:bold;">ANNOTATION SCALING</div>
<svg style="left:0;top:0" width="1920" height="1080" viewBox="0 0 1920 1080"><rect x="268.500" y="267.500" width="1011.500" height="700.500" fill="none" stroke="#2a2a2a" stroke-width="1.100"/><path d="M1179.500 267.500 V317.500 H1280" fill="none" stroke="#2a2a2a" stroke-width="1.100"/><rect x="1179.500" y="655" width="100.500" height="82.3" fill="none" stroke="#2a2a2a" stroke-width="1.050"/><rect x="1179.500" y="742.3" width="100.500" height="41.0" fill="none" stroke="#2a2a2a" stroke-width="1.050"/><rect x="1179.500" y="783.3" width="100.500" height="41.7" fill="none" stroke="#2a2a2a" stroke-width="1.050"/><rect x="1179.500" y="829" width="100.500" height="82.0" fill="none" stroke="#2a2a2a" stroke-width="1.050"/><rect x="1179.500" y="915.7" width="100.500" height="51.8" fill="none" stroke="#2a2a2a" stroke-width="1.050"/><defs>
<linearGradient id="gLugL" x1="0" x2="1"><stop offset="0" stop-color="#555"/><stop offset="0.1" stop-color="#bbb"/><stop offset="0.3" stop-color="#fff"/><stop offset="0.75" stop-color="#fff"/><stop offset="0.92" stop-color="#bbb"/><stop offset="1" stop-color="#555"/></linearGradient>
<linearGradient id="gLugR" x1="0" x2="1"><stop offset="0" stop-color="#ddd"/><stop offset="0.2" stop-color="#fff"/><stop offset="0.7" stop-color="#fff"/><stop offset="0.9" stop-color="#bbb"/><stop offset="1" stop-color="#444"/></linearGradient>
<linearGradient id="gHub" x1="0" x2="1"><stop offset="0" stop-color="#888"/><stop offset="0.08" stop-color="#eee"/><stop offset="0.25" stop-color="#fff"/><stop offset="0.62" stop-color="#fff"/><stop offset="0.85" stop-color="#aaa"/><stop offset="1" stop-color="#444"/></linearGradient>
<linearGradient id="gArm2" gradientUnits="userSpaceOnUse" x1="879" x2="998"><stop offset="0" stop-color="#4c4c4c"/><stop offset="0.1" stop-color="#6a6a6a"/><stop offset="0.5" stop-color="#929292"/><stop offset="1" stop-color="#c2c2c2"/></linearGradient><linearGradient id="gArm1" x1="0" x2="1"><stop offset="0" stop-color="#fff"/><stop offset="0.8" stop-color="#fff"/><stop offset="1" stop-color="#e4e4e4"/></linearGradient><linearGradient id="gStub" x1="0" x2="1"><stop offset="0" stop-color="#6a6a6a"/><stop offset="0.3" stop-color="#909090"/><stop offset="1" stop-color="#858585"/></linearGradient>
<linearGradient id="gHub2" x1="0" x2="1"><stop offset="0" stop-color="#999"/><stop offset="0.1" stop-color="#f4f4f4"/><stop offset="0.5" stop-color="#fff"/><stop offset="0.85" stop-color="#e6e6e6"/><stop offset="1" stop-color="#999"/></linearGradient>
<linearGradient id="gLugF" x1="0" x2="1"><stop offset="0" stop-color="#fff"/><stop offset="0.8" stop-color="#fff"/><stop offset="1" stop-color="#aaa"/></linearGradient>
</defs><rect x="364.5" y="371.5" width="57.5" height="66" rx="4.5" fill="url(#gLugL)" stroke="#111" stroke-width="1.6"/><rect x="593" y="371.5" width="56" height="66" rx="4.5" fill="url(#gLugR)" stroke="#111" stroke-width="1.6"/><rect x="498.500" y="352.500" width="92.500" height="103.500" rx="4.500" fill="url(#gHub)" stroke="#111" stroke-width="1.6"/><path d="M392.500 388 L400 384 H597 V424.500 H400 L392.500 421 Z" fill="url(#gArm1)" stroke="none"/><path d="M405 384 H597 M405 424.500 H597" fill="none" stroke="#111" stroke-width="1.700"/><path d="M392.500 388 V421 M392.500 388 L406 380.500 H421 M392.500 421 L406 428.500 H421" fill="none" stroke="#111" stroke-width="0.900"/><path d="M597 384 V424.500" stroke="#111" stroke-width="0.700" stroke-dasharray="3 3"/><path d="M393 387.5 H416" stroke="#111" stroke-width="0.8"/><path d="M460 387.5 H489" stroke="#111" stroke-width="0.8"/><path d="M529 387.5 H552" stroke="#111" stroke-width="0.8"/><path d="M582 387.5 H597" stroke="#111" stroke-width="0.8"/><path d="M375 404.5 H416" stroke="#111" stroke-width="0.8"/><path d="M460 404.5 H489" stroke="#111" stroke-width="0.8"/><path d="M529 404.5 H552" stroke="#111" stroke-width="0.8"/><path d="M582 404.5 H612.5" stroke="#111" stroke-width="0.8"/><path d="M393 421.5 H416" stroke="#111" stroke-width="0.8"/><path d="M460 421.5 H489" stroke="#111" stroke-width="0.8"/><path d="M529 421.5 H552" stroke="#111" stroke-width="0.8"/><path d="M582 421.5 H597" stroke="#111" stroke-width="0.8"/><path d="M506 356 H528 M572 356 H587" stroke="#111" stroke-width="0.8"/><path d="M506 452.7 H528 M572 452.7 H587" stroke="#111" stroke-width="0.8"/><path d="M510 379 H535 M579 379 H590" stroke="#111" stroke-width="0.8"/><path d="M510 428.8 H535 M579 428.8 H590" stroke="#111" stroke-width="0.8"/><path d="M370 375 H378 M370 434 H378 M636 375 H646 M636 434 H646" stroke="#111" stroke-width="0.7"/><rect x="805" y="352.500" width="92" height="103.500" rx="4.500" fill="url(#gHub2)" stroke="#111" stroke-width="1.6"/><rect x="953.500" y="371.500" width="57.500" height="65.500" rx="4.500" fill="url(#gLugR)" stroke="#111" stroke-width="1.6"/><path d="M804 384 H984 Q997.500 386 997.500 397 V412 Q997.500 423 984 424.500 H804 Z" fill="url(#gArm2)" stroke="#111" stroke-width="1.500"/><path d="M804 384 L812 379 H823 M804 424.500 L812 429 H823" stroke="#111" stroke-width="1" fill="none"/><rect x="804" y="384" width="19" height="40.500" fill="url(#gStub)" stroke="#111" stroke-width="1"/><path d="M984 384 L978 380 H960 M984 424.500 L978 428 H960" stroke="#111" stroke-width="0.900" fill="none"/><rect x="823.500" y="371.500" width="55.500" height="65.500" rx="4.500" fill="url(#gLugF)" stroke="#111" stroke-width="1.6"/><path d="M812 387.5 H823" stroke="#111" stroke-width="0.800"/><path d="M873 387.5 H902" stroke="#111" stroke-width="0.800"/><path d="M925 387.5 H943" stroke="#111" stroke-width="0.800"/><path d="M978 387.5 H997" stroke="#111" stroke-width="0.800"/><path d="M804 404.5 H832" stroke="#111" stroke-width="0.800"/><path d="M873 404.5 H902" stroke="#111" stroke-width="0.800"/><path d="M925 404.5 H943" stroke="#111" stroke-width="0.800"/><path d="M978 404.5 H1011" stroke="#111" stroke-width="0.800"/><path d="M812 421.5 H823" stroke="#111" stroke-width="0.800"/><path d="M873 421.5 H902" stroke="#111" stroke-width="0.800"/><path d="M925 421.5 H943" stroke="#111" stroke-width="0.800"/><path d="M978 421.5 H997" stroke="#111" stroke-width="0.800"/><path d="M812 356 H828 M872 356 H892" stroke="#111" stroke-width="0.800"/><path d="M812 452.7 H828 M872 452.7 H892" stroke="#111" stroke-width="0.800"/><path d="M836 375 H866 M967 375 H995" stroke="#111" stroke-width="0.800"/><path d="M836 433.5 H866 M967 433.5 H995" stroke="#111" stroke-width="0.800"/><path d="M386 616.500 L540 597.700 A46.500 46.500 0 0 1 587.500 626 L647.500 766 A29 29 0 0 1 597 793.500 C564 742.300 499.300 671.200 392 673.600 A29 29 0 0 1 386 616.500 Z" stroke="#111" fill="none" stroke-width="1.800"/><path d="M408 619 L515 603.500 M412 677 C475 680 545 728 589 786" stroke="#111" fill="none" stroke-width="0.800"/><path d="M589 640 L634 750" stroke="#111" fill="none" stroke-width="0.800"/><circle cx="392.700" cy="644.700" r="27" stroke="#111" fill="none" stroke-width="0.8"/><circle cx="620" cy="776" r="27" stroke="#111" fill="none" stroke-width="0.8"/><circle cx="392.700" cy="644.700" r="24.5" stroke="#111" fill="none" stroke-width="0.8"/><circle cx="620" cy="776" r="24.5" stroke="#111" fill="none" stroke-width="0.8"/><circle cx="392.700" cy="644.700" r="19" stroke="#111" fill="none" stroke-width="0.9"/><circle cx="620" cy="776" r="19" stroke="#111" fill="none" stroke-width="0.9"/><circle cx="392.700" cy="644.700" r="17" stroke="#111" fill="none" stroke-width="1.6"/><circle cx="620" cy="776" r="17" stroke="#111" fill="none" stroke-width="1.6"/><circle cx="392.700" cy="644.700" r="15.5" stroke="#111" fill="none" stroke-width="0.8"/><circle cx="620" cy="776" r="15.5" stroke="#111" fill="none" stroke-width="0.8"/><circle cx="544.300" cy="644.300" r="31.5" stroke="#111" fill="none" stroke-width="1.8"/><circle cx="544.300" cy="644.300" r="33.5" stroke="#111" fill="none" stroke-width="0.8"/><circle cx="544.300" cy="644.300" r="37" stroke="#111" fill="none" stroke-width="0.9"/><path d="M540.8 684.1 A40 40 0 0 1 518.6 674.9" stroke="#111" fill="none" stroke-width="0.8"/><path d="M536.8 686.6 A43 43 0 0 1 511.4 671.9" stroke="#111" fill="none" stroke-width="0.8"/><path d="M532.1 689.7 A47 47 0 0 1 511.1 677.5" stroke="#111" fill="none" stroke-width="0.8"/><path d="M509.7 664.3 A40 40 0 0 1 530.6 606.7" stroke="#111" fill="none" stroke-width="0.8"/><path d="M501.5 640.6 A43 43 0 0 1 526.1 605.3" stroke="#111" fill="none" stroke-width="0.8"/><path d="M583.7 651.2 A40 40 0 0 1 564.3 678.9" stroke="#111" fill="none" stroke-width="0.8"/><path d="M584.7 659.0 A43 43 0 0 1 571.9 677.2" stroke="#111" fill="none" stroke-width="0.8"/><path d="M551.2 604.9 A40 40 0 0 1 581.9 630.6" stroke="#111" fill="none" stroke-width="0.8"/><path d="M559.0 603.9 A43 43 0 0 1 581.5 622.8" stroke="#111" fill="none" stroke-width="0.8"/><path d="M404.0 613.7 A33 33 0 0 1 404.0 675.7" stroke="#111" fill="none" stroke-width="0.8"/><path d="M587.5 770.3 A33 33 0 0 1 636.5 747.4" stroke="#111" fill="none" stroke-width="0.8"/><defs>
<linearGradient id="cb" x1="0" x2="1"><stop offset="0" stop-color="#454547"/><stop offset="0.3" stop-color="#666668"/><stop offset="0.65" stop-color="#5e5e60"/><stop offset="1" stop-color="#48484a"/></linearGradient>
<linearGradient id="lb" x1="0" x2="1"><stop offset="0" stop-color="#3c3c3e"/><stop offset="0.4" stop-color="#5c5c5e"/><stop offset="0.8" stop-color="#505052"/><stop offset="1" stop-color="#404042"/></linearGradient>
<linearGradient id="hole" x1="0" x2="1"><stop offset="0" stop-color="#343436"/><stop offset="0.5" stop-color="#4a4a4c"/><stop offset="1" stop-color="#626264"/></linearGradient>
<linearGradient id="side" x1="0" y1="0" x2="0" y2="1"><stop offset="0" stop-color="#6e6e70"/><stop offset="0.3" stop-color="#5a5a5c"/><stop offset="1" stop-color="#434345"/></linearGradient>
<linearGradient id="topf" x1="0" y1="0" x2="1" y2="0.2"><stop offset="0" stop-color="#565658"/><stop offset="0.5" stop-color="#5f5f61"/><stop offset="1" stop-color="#5a5a5c"/></linearGradient>
<radialGradient id="fil" cx="0.5" cy="0.3" r="0.7"><stop offset="0" stop-color="#58585a"/><stop offset="1" stop-color="#68686a"/></radialGradient>
</defs><path d="M888 745 V758 A31 11 0 0 0 950 756 V745 Z" fill="#3b3b3d"/><path d="M1033 699 V751 A26.500 13 0 0 0 1086 751 V699 Z" fill="url(#lb)"/><path d="M831.300 757 C845 750 858 746 871 742.200 C890 736 920 728 945 724.600 C975 721 1010 720.500 1046 722.800 L1036 751.500 C1020 749.500 1010 749.600 1000 749.600 C985 749 975 749 963.700 749.600 C950 750.500 940 751 926.700 753.300 C912 756 900 759 889.600 762.600 C875 768 865 772 852.600 777.400 C845 781 838 784 832 787 Z" fill="url(#side)"/><path d="M805 724 L863.700 682 L959 670 L1060 685 L1080 705 L1046 722.800 C1010 720.500 975 721 945 724.600 C920 728 890 736 871 742.200 C858 746 845 750 831.300 757 Z" fill="url(#topf)"/><path d="M831.300 757 C845 750 858 746 871 742.200 C890 736 920 728 945 724.600 C975 721 1010 720.500 1046 722.800" fill="none" stroke="#767678" stroke-width="1.600"/><ellipse cx="912.500" cy="700" rx="49" ry="14" fill="url(#fil)"/><path d="M868.300 659.500 V697 A44.400 13 0 0 0 957.200 697 V659.500 Z" fill="url(#cb)"/><ellipse cx="912.800" cy="659.500" rx="44.400" ry="23" fill="#6c6c6e"/><ellipse cx="912.800" cy="659.300" rx="35.500" ry="16.500" fill="url(#hole)"/><path d="M877.500 661 A35.500 16.500 0 0 0 948 661 A35.500 11 0 0 1 877.500 661 Z" fill="#5c5c5e"/><path d="M778.500 737 V791 A26.500 12.500 0 0 0 831.500 791 V737 Z" fill="url(#lb)"/><ellipse cx="805" cy="737" rx="26.500" ry="13.400" fill="#6a6a6c"/><ellipse cx="805" cy="738.500" rx="19" ry="9.200" fill="url(#hole)"/><ellipse cx="1059.500" cy="699" rx="26.500" ry="13.400" fill="#6a6a6c"/><ellipse cx="1059" cy="700" rx="18.500" ry="8.900" fill="url(#hole)"/><path d="M1011.500 560 H991.700 L926 637" stroke="#222" stroke-width="1" fill="none"/><path d="M924.500 638.500 L927 631.500 L931 635 Z" fill="#222"/><path d="M1021.700 632.500 H1001 L960 661" stroke="#222" stroke-width="1" fill="none"/><path d="M958.500 662 L963 656.500 L966 660.500 Z" fill="#222"/><path d="M782.400 645 H802 L861 679.500" stroke="#222" stroke-width="1" fill="none"/><path d="M863 680.700 L856 679.500 L858.500 675 Z" fill="#222"/><rect x="1099.500" y="570.500" width="9" height="9" fill="none" stroke="#333" stroke-width="1"/><path d="M98.500 834 V847.500" stroke="#222" stroke-width="1.300"/><path d="M98.500 847.500 V902" stroke="#8fbf9f" stroke-width="1.500" opacity="0.800"/><path d="M140 856 V902" stroke="#8fbf9f" stroke-width="1.500" opacity="0.800"/><path d="M140 902 H166.500" stroke="#333" stroke-width="1.600"/><path d="M130.500 847.500 V856 H139.500 Z" fill="none" stroke="#333" stroke-width="1.200"/><path d="M98.500 814 v12" stroke="#8fbf9f" stroke-width="3" opacity="0.600"/></svg>
<div style="left:1190.5px;top:280px;width:16px;height:16.5px;background:#3f86e8;"></div>
<svg style="left:1190.5px;top:280px;" width="16" height="16.5" viewBox="0 0 16 16.5"><path d="M8.300 4.500 L5.800 12 M7.600 7 C8.500 8 9.500 10 11.500 10" stroke="#fff" stroke-width="1.300" fill="none" stroke-linecap="round"/></svg>
<div style="left:1210.0px;top:279.8px;font-size:15.5px;line-height:15.5px;color:#222;letter-spacing:-0.27px;font-weight:bold;">Bricsys</div>
<div style="left:1265.5px;top:282.6px;font-size:5px;line-height:5px;color:#777;">®</div>
<div style="left:1213.7px;top:301.5px;font-size:4.5px;line-height:4.5px;color:#555;letter-spacing:-0.16px;font-weight:bold;">part of Hexagon</div>
<div style="left:1016.0px;top:552.1px;font-size:14px;line-height:14px;color:#1a1a1a;letter-spacing:0.41px;">45°</div>
<div style="left:1038.5px;top:552.1px;font-size:14px;line-height:14px;color:#1a1a1a;letter-spacing:-0.04px;font-style:italic;">CHAMFER</div>
<div style="left:1112.0px;top:552.1px;font-size:14px;line-height:14px;color:#1a1a1a;letter-spacing:0.07px;">on edge</div>
<div style="left:1026.0px;top:625.5px;font-size:14px;line-height:14px;color:#1a1a1a;letter-spacing:0.06px;">2mm Fillet rad</div>
<div style="left:688.0px;top:638.1px;font-size:14px;line-height:14px;color:#1a1a1a;letter-spacing:0.02px;">5mm Fillet rad</div>
<div style="left:883.0px;top:811.3px;font-size:10.5px;line-height:10.5px;color:#1a1a1a;letter-spacing:0.05px;font-weight:bold;">Surface area of cast Bell Crank</div>
<div style="left:883.0px;top:823.5px;font-size:10.5px;line-height:10.5px;color:#1a1a1a;letter-spacing:0.01px;">777.73 cm2</div>
<div style="left:108.0px;top:880.7px;font-size:17px;line-height:17px;color:#222;">W</div>
<div style="left:1191.3px;top:659.6px;font-size:9.5px;line-height:9.5px;color:#111;letter-spacing:0.12px;font-weight:bold;text-decoration:underline;">DRAWING TITLE:</div>
<div style="left:1191.0px;top:683.0px;font-size:9.5px;line-height:9.5px;color:#111;letter-spacing:0.11px;font-weight:bold;">Bell Crank</div>
<div style="left:1191.0px;top:746.3px;font-size:9.5px;line-height:9.5px;color:#111;letter-spacing:0.11px;font-weight:bold;">DATE</div>
<div style="left:1191.0px;top:758.3px;font-size:9.5px;line-height:9.5px;color:#111;letter-spacing:0.16px;font-weight:bold;">25/02/2024</div>
<div style="left:1191.0px;top:788.0px;font-size:9.5px;line-height:9.5px;color:#111;letter-spacing:-0.07px;font-weight:bold;">SCALE:</div>
<div style="left:1191.0px;top:799.6px;font-size:9.5px;line-height:9.5px;color:#111;letter-spacing:0.09px;font-weight:bold;">As specified</div>
<div style="left:1191.0px;top:833.6px;font-size:9.5px;line-height:9.5px;color:#111;letter-spacing:-0.06px;font-weight:bold;text-decoration:underline;">CLIENT</div>
<div style="left:1191.0px;top:845.3px;font-size:9.5px;line-height:9.5px;color:#111;letter-spacing:0.04px;font-weight:bold;">Bricsys BV</div>
<div style="left:1191.0px;top:920.3px;font-size:9.5px;line-height:9.5px;color:#111;letter-spacing:0.05px;font-weight:bold;">ENGINEER</div>
<div style="left:1191.0px;top:932.0px;font-size:9.5px;line-height:9.5px;color:#111;letter-spacing:0.11px;font-weight:bold;">M. Tooley</div>
<div style="left:243px;top:920px;width:265px;height:20px;background:rgba(215,214,217,0.85);"></div>
<div style="left:244.0px;top:922.9px;font-size:13.5px;line-height:13.5px;color:#c9c8cb;letter-spacing:-0.04px;font-family:'Liberation Mono',monospace;">Select entity to modify: &#x27;._ZOOM</div>
<div style="left:240px;top:946px;width:980px;height:20.5px;background:rgba(160,159,162,0.88);"></div>
<div style="left:243.5px;top:949.9px;font-size:13.5px;line-height:13.5px;color:#f4f4f6;letter-spacing:-0.01px;font-family:'Liberation Mono',monospace;">Zoom [zoom In/zoom Out/All/Center/Dynamic/Extents/Left/Previous/Right/Scale (nx/nxp)/Window/OBject] &lt;Scale (nX/nXP)&gt;: _E</div>
<div style="left:240px;top:975px;width:1068px;height:19px;background:#4b4b4d;"></div>
<svg style="left:243px;top:978px;" width="2" height="14" viewBox="0 0 2 14"><rect x="0" y="0" width="1.500" height="1.500" fill="#ddd"/><rect x="0" y="3" width="1.500" height="1.500" fill="#ddd"/><rect x="0" y="6" width="1.500" height="1.500" fill="#ddd"/><rect x="0" y="9" width="1.500" height="1.500" fill="#ddd"/><rect x="0" y="12" width="1.500" height="1.500" fill="#ddd"/></svg>
<div style="left:249.0px;top:978.7px;font-size:13.5px;line-height:13.5px;color:#f2f2f4;letter-spacing:-0.02px;font-family:'Liberation Mono',monospace;">Select entity to modify:</div>
<svg style="left:1290px;top:980px;" width="9" height="6" viewBox="0 0 9 6"><path d="M0 6 L4.500 0.500 L9 6 Z" fill="#f2f2f4"/></svg>
<svg style="left:1723px;top:218px;" width="14" height="3" viewBox="0 0 14 3"><rect x="0" y="0" width="2" height="2" fill="#c8cace"/><rect x="3.7" y="0" width="2" height="2" fill="#c8cace"/><rect x="7.4" y="0" width="2" height="2" fill="#c8cace"/><rect x="11.1" y="0" width="2" height="2" fill="#c8cace"/></svg>
<div style="left:1556px;top:230px;width:259px;height:25px;background:#393c43;border-radius:2px;"></div>
<div style="left:1560.8px;top:236.5px;font-size:13.25px;line-height:13.25px;color:#eceded;letter-spacing:-0.35px;">No Selection</div>
<svg style="left:1800px;top:240px;" width="10" height="7" viewBox="0 0 10 7"><path d="M1 1 L5 5 L9 1" stroke="#c4c6ca" stroke-width="1.300" fill="none"/></svg>
<svg style="left:1822px;top:232px;" width="19" height="19" viewBox="0 0 19 19"><path d="M1 1.500 H15 L9.500 8 V15 L6.500 13 V8 Z" stroke="#a8abb0" stroke-width="1.200" fill="none" stroke-linejoin="round"/><path d="M15 9 l-3 4 h2.500 l-1.500 4 l4 -5 h-2.500 z" fill="#8a8d93"/></svg>
<svg style="left:1845px;top:234px;" width="20" height="12" viewBox="0 0 20 12"><path d="M0.500 6 C4 0.500 15 0.500 19 6 C15 11.500 4 11.500 0.500 6 Z" fill="#e6e7ea"/><circle cx="9.800" cy="6" r="4.300" fill="#3f86e8"/><circle cx="9.800" cy="5.600" r="1.800" fill="#1d3466"/></svg>
<div style="left:1567px;top:259.5px;width:305px;height:22.5px;background:#40424a;"></div>
<svg style="left:1554.5px;top:265.8px;" width="10" height="10" viewBox="0 0 10 10"><rect x="0" y="0" width="10" height="10" fill="#dcdde0"/><rect x="2" y="4" width="6" height="2" fill="#2b2e33"/></svg>
<div style="left:1570.5px;top:263.7px;font-size:14.5px;line-height:14.5px;color:#f2f2f4;letter-spacing:-0.25px;font-weight:bold;">General</div>
<div style="left:1567px;top:304.0px;width:305px;height:1px;background:#3b3e45;"></div>
<div style="left:1651px;top:282.0px;width:1px;height:22.5px;background:#3b3e45;"></div>
<div style="left:1571.4px;top:282.0px;width:79.5px;height:22.5px;overflow:hidden"><div style="left:0.0px;top:4.6px;font-size:13.75px;line-height:13.75px;color:#e8e9eb;letter-spacing:-0.24px;">Color</div></div>
<div style="left:1658px;top:285px;width:17px;height:17px;background:#ffffff;border:1px solid #222;"></div>
<div style="left:1680.0px;top:286.7px;font-size:13.5px;line-height:13.5px;color:#e8e9eb;letter-spacing:-0.25px;">ByLayer</div>
<div style="left:1567px;top:326.5px;width:305px;height:1px;background:#3b3e45;"></div>
<div style="left:1651px;top:304.5px;width:1px;height:22.5px;background:#3b3e45;"></div>
<div style="left:1571.4px;top:304.5px;width:79.5px;height:22.5px;overflow:hidden"><div style="left:0.0px;top:4.7px;font-size:13.5px;line-height:13.5px;color:#e8e9eb;letter-spacing:-0.19px;">Layer</div></div>
<div style="left:1655.0px;top:309.1px;font-size:13.75px;line-height:13.75px;color:#e8e9eb;letter-spacing:-0.30px;">Flatshot</div>
<div style="left:1567px;top:349.0px;width:305px;height:1px;background:#3b3e45;"></div>
<div style="left:1651px;top:327.0px;width:1px;height:22.5px;background:#3b3e45;"></div>
<div style="left:1571.4px;top:327.0px;width:79.5px;height:22.5px;overflow:hidden"><div style="left:0.0px;top:4.7px;font-size:13.5px;line-height:13.5px;color:#e8e9eb;letter-spacing:-0.22px;">Linetype</div></div>
<div style="left:1658px;top:337.5px;width:110px;height:1px;background:#d8d9dc;"></div>
<div style="left:1772.0px;top:331.7px;font-size:13.5px;line-height:13.5px;color:#e8e9eb;letter-spacing:-0.25px;">ByLayer</div>
<div style="left:1567px;top:371.5px;width:305px;height:1px;background:#3b3e45;"></div>
<div style="left:1651px;top:349.5px;width:1px;height:22.5px;background:#3b3e45;"></div>
<div style="left:1571.4px;top:349.5px;width:79.5px;height:22.5px;overflow:hidden"><div style="left:0.0px;top:4.4px;font-size:14px;line-height:14px;color:#e8e9eb;letter-spacing:-0.35px;">Linetype scale</div></div>
<div style="left:1655.0px;top:353.9px;font-size:14px;line-height:14px;color:#e8e9eb;">1</div>
<div style="left:1567px;top:394.0px;width:305px;height:1px;background:#3b3e45;"></div>
<div style="left:1651px;top:372.0px;width:1px;height:22.5px;background:#3b3e45;"></div>
<div style="left:1571.4px;top:372.0px;width:79.5px;height:22.5px;overflow:hidden"><div style="left:0.0px;top:4.8px;font-size:13.25px;line-height:13.25px;color:#e8e9eb;letter-spacing:-0.23px;">Lineweight</div></div>
<div style="left:1657px;top:381.5px;width:110px;height:2px;background:#f0f0f2;"></div>
<div style="left:1771.0px;top:376.7px;font-size:13.5px;line-height:13.5px;color:#e8e9eb;letter-spacing:-0.25px;">ByLayer</div>
<div style="left:1567px;top:416.5px;width:305px;height:1px;background:#3b3e45;"></div>
<div style="left:1651px;top:394.5px;width:1px;height:22.5px;background:#3b3e45;"></div>
<div style="left:1571.4px;top:394.5px;width:79.5px;height:22.5px;overflow:hidden"><div style="left:0.0px;top:4.4px;font-size:14px;line-height:14px;color:#e8e9eb;letter-spacing:-0.19px;">Transparency</div></div>
<div style="left:1655.0px;top:399.2px;font-size:13.5px;line-height:13.5px;color:#e8e9eb;letter-spacing:-0.25px;">ByLayer</div>
<div style="left:1567px;top:439.0px;width:305px;height:1px;background:#3b3e45;"></div>
<div style="left:1651px;top:417.0px;width:1px;height:22.5px;background:#3b3e45;"></div>
<div style="left:1571.4px;top:417.0px;width:79.5px;height:22.5px;overflow:hidden"><div style="left:0.0px;top:4.8px;font-size:13.25px;line-height:13.25px;color:#e8e9eb;letter-spacing:-0.22px;">Elevation</div></div>
<div style="left:1655.0px;top:421.4px;font-size:14px;line-height:14px;color:#e8e9eb;letter-spacing:0.17px;">0 mm</div>
<div style="left:1567px;top:439.5px;width:305px;height:22.5px;background:#40424a;"></div>
<svg style="left:1554.5px;top:445.8px;" width="10" height="10" viewBox="0 0 10 10"><rect x="0" y="0" width="10" height="10" fill="#dcdde0"/><rect x="2" y="4" width="6" height="2" fill="#2b2e33"/></svg>
<div style="left:1570.5px;top:443.7px;font-size:14.5px;line-height:14.5px;color:#f2f2f4;letter-spacing:0.07px;font-weight:bold;">View</div>
<div style="left:1567px;top:484.0px;width:305px;height:1px;background:#3b3e45;"></div>
<div style="left:1651px;top:462.0px;width:1px;height:22.5px;background:#3b3e45;"></div>
<svg style="left:1554.5px;top:468.3px;" width="10" height="10" viewBox="0 0 10 10"><rect x="0" y="0" width="10" height="10" fill="#dcdde0"/><rect x="2" y="4.200" width="6" height="1.600" fill="#2b2e33"/><rect x="4.200" y="2" width="1.600" height="6" fill="#2b2e33"/></svg>
<div style="left:1571.4px;top:462.0px;width:79.5px;height:22.5px;overflow:hidden"><div style="left:0.0px;top:4.7px;font-size:13.5px;line-height:13.5px;color:#e8e9eb;letter-spacing:-0.30px;">Camera</div></div>
<div style="left:1655.0px;top:466.4px;font-size:14px;line-height:14px;color:#e8e9eb;letter-spacing:0.18px;">0, 0, 1</div>
<div style="left:1567px;top:506.5px;width:305px;height:1px;background:#3b3e45;"></div>
<div style="left:1651px;top:484.5px;width:1px;height:22.5px;background:#3b3e45;"></div>
<svg style="left:1554.5px;top:490.8px;" width="10" height="10" viewBox="0 0 10 10"><rect x="0" y="0" width="10" height="10" fill="#dcdde0"/><rect x="2" y="4.200" width="6" height="1.600" fill="#2b2e33"/><rect x="4.200" y="2" width="1.600" height="6" fill="#2b2e33"/></svg>
<div style="left:1571.4px;top:484.5px;width:79.5px;height:22.5px;overflow:hidden"><div style="left:0.0px;top:4.4px;font-size:14px;line-height:14px;color:#e8e9eb;letter-spacing:0.22px;">Target</div></div>
<div style="left:1655.0px;top:488.9px;font-size:14px;line-height:14px;color:#e8e9eb;letter-spacing:0.26px;">0, 0, 0</div>
<div style="left:1567px;top:529.0px;width:305px;height:1px;background:#3b3e45;"></div>
<div style="left:1651px;top:507.0px;width:1px;height:22.5px;background:#3b3e45;"></div>
<div style="left:1571.4px;top:507.0px;width:79.5px;height:22.5px;overflow:hidden"><div style="left:0.0px;top:4.8px;font-size:13.25px;line-height:13.25px;color:#e8e9eb;letter-spacing:-0.20px;">Perspective</div></div>
<div style="left:1655.0px;top:511.4px;font-size:14px;line-height:14px;color:#e8e9eb;letter-spacing:0.44px;">Off</div>
<div style="left:1567px;top:551.5px;width:305px;height:1px;background:#3b3e45;"></div>
<div style="left:1651px;top:529.5px;width:1px;height:22.5px;background:#3b3e45;"></div>
<div style="left:1571.4px;top:529.5px;width:79.5px;height:22.5px;overflow:hidden"><div style="left:0.0px;top:4.7px;font-size:13.5px;line-height:13.5px;color:#e8e9eb;letter-spacing:-0.33px;">Lens length</div></div>
<div style="left:1655.0px;top:533.9px;font-size:14px;line-height:14px;color:#e8e9eb;letter-spacing:-0.07px;">50 mm</div>
<div style="left:1567px;top:574.0px;width:305px;height:1px;background:#3b3e45;"></div>
<div style="left:1651px;top:552.0px;width:1px;height:22.5px;background:#3b3e45;"></div>
<div style="left:1571.4px;top:552.0px;width:79.5px;height:22.5px;overflow:hidden"><div style="left:0.0px;top:4.7px;font-size:13.5px;line-height:13.5px;color:#e8e9eb;letter-spacing:-0.25px;">Field of view</div></div>
<div style="left:1655.0px;top:556.4px;font-size:14px;line-height:14px;color:#e8e9eb;letter-spacing:-0.26px;">38.58</div>
<div style="left:1567px;top:596.5px;width:305px;height:1px;background:#3b3e45;"></div>
<div style="left:1651px;top:574.5px;width:1px;height:22.5px;background:#3b3e45;"></div>
<div style="left:1571.4px;top:574.5px;width:79.5px;height:22.5px;overflow:hidden"><div style="left:0.0px;top:4.8px;font-size:13.25px;line-height:13.25px;color:#e8e9eb;letter-spacing:-0.23px;">Height</div></div>
<div style="left:1655.0px;top:578.9px;font-size:14px;line-height:14px;color:#7f8289;letter-spacing:-0.19px;">302.94 mm</div>
<div style="left:1567px;top:619.0px;width:305px;height:1px;background:#3b3e45;"></div>
<div style="left:1651px;top:597.0px;width:1px;height:22.5px;background:#3b3e45;"></div>
<div style="left:1571.4px;top:597.0px;width:79.5px;height:22.5px;overflow:hidden"><div style="left:0.0px;top:4.7px;font-size:13.5px;line-height:13.5px;color:#e8e9eb;letter-spacing:-0.25px;">Width</div></div>
<div style="left:1655.0px;top:601.4px;font-size:14px;line-height:14px;color:#7f8289;letter-spacing:-0.19px;">612.29 mm</div>
<div style="left:1567px;top:641.5px;width:305px;height:1px;background:#3b3e45;"></div>
<div style="left:1651px;top:619.5px;width:1px;height:22.5px;background:#3b3e45;"></div>
<div style="left:1571.4px;top:619.5px;width:79.5px;height:22.5px;overflow:hidden"><div style="left:0.0px;top:5.2px;font-size:12.5px;line-height:12.5px;color:#e8e9eb;letter-spacing:-0.38px;">Clipping</div></div>
<div style="left:1655.0px;top:623.9px;font-size:14px;line-height:14px;color:#7f8289;letter-spacing:0.44px;">Off</div>
<div style="left:1567px;top:664.0px;width:305px;height:1px;background:#3b3e45;"></div>
<div style="left:1651px;top:642.0px;width:1px;height:22.5px;background:#3b3e45;"></div>
<div style="left:1571.4px;top:642.0px;width:79.5px;height:22.5px;overflow:hidden"><div style="left:0.0px;top:4.7px;font-size:13.5px;line-height:13.5px;color:#e8e9eb;letter-spacing:-0.23px;">Front plane</div></div>
<div style="left:1655.0px;top:646.4px;font-size:14px;line-height:14px;color:#7f8289;">1 mm</div>
<div style="left:1567px;top:686.5px;width:305px;height:1px;background:#3b3e45;"></div>
<div style="left:1651px;top:664.5px;width:1px;height:22.5px;background:#3b3e45;"></div>
<div style="left:1571.4px;top:664.5px;width:79.5px;height:22.5px;overflow:hidden"><div style="left:0.0px;top:4.8px;font-size:13.25px;line-height:13.25px;color:#e8e9eb;letter-spacing:-0.26px;">Back plane</div></div>
<div style="left:1655.0px;top:668.9px;font-size:14px;line-height:14px;color:#7f8289;letter-spacing:0.17px;">0 mm</div>
<div style="left:1567px;top:709.0px;width:305px;height:1px;background:#3b3e45;"></div>
<div style="left:1651px;top:687.0px;width:1px;height:22.5px;background:#3b3e45;"></div>
<div style="left:1571.4px;top:687.0px;width:79.5px;height:22.5px;overflow:hidden"><div style="left:0.0px;top:4.8px;font-size:13.25px;line-height:13.25px;color:#e8e9eb;letter-spacing:-0.23px;">Visual style</div></div>
<div style="left:1655.0px;top:691.7px;font-size:13.5px;line-height:13.5px;color:#7f8289;letter-spacing:-0.22px;">Shades of Gray</div>
<div style="left:1567px;top:709.5px;width:305px;height:22.5px;background:#40424a;"></div>
<svg style="left:1554.5px;top:715.8px;" width="10" height="10" viewBox="0 0 10 10"><rect x="0" y="0" width="10" height="10" fill="#dcdde0"/><rect x="2" y="4" width="6" height="2" fill="#2b2e33"/></svg>
<div style="left:1570.5px;top:713.8px;font-size:14.25px;line-height:14.25px;color:#f2f2f4;letter-spacing:-0.19px;font-weight:bold;">Misc</div>
<div style="left:1567px;top:754.0px;width:305px;height:1px;background:#3b3e45;"></div>
<div style="left:1651px;top:732.0px;width:1px;height:22.5px;background:#3b3e45;"></div>
<div style="left:1571.4px;top:732.0px;width:79.5px;height:22.5px;overflow:hidden"><div style="left:0.0px;top:4.6px;font-size:13.75px;line-height:13.75px;color:#e8e9eb;letter-spacing:-0.27px;">Annotation scale</div></div>
<div style="left:1655.0px;top:736.6px;font-size:13.75px;line-height:13.75px;color:#7f8289;letter-spacing:-0.34px;">1:1</div>
<div style="left:1567px;top:776.5px;width:305px;height:1px;background:#3b3e45;"></div>
<div style="left:1651px;top:754.5px;width:1px;height:22.5px;background:#3b3e45;"></div>
<div style="left:1571.4px;top:754.5px;width:79.5px;height:22.5px;overflow:hidden"><div style="left:0.0px;top:4.4px;font-size:14px;line-height:14px;color:#e8e9eb;letter-spacing:-0.04px;">Default lighting</div></div>
<div style="left:1655.0px;top:758.9px;font-size:14px;line-height:14px;color:#e8e9eb;letter-spacing:0.44px;">Off</div>
<div style="left:1872px;top:226px;width:48px;height:48px;background:#2b2e33;"></div>
<svg style="left:1886px;top:240px;" width="23" height="19" viewBox="0 0 23 19"><path d="M1 4.500 H5 M11 4.500 H22 M1 14.500 H12 M18 14.500 H22" stroke="#d6d8dc" stroke-width="1.300" fill="none" stroke-linejoin="round" stroke-linecap="round"/><circle cx="8" cy="4.500" r="2.500" stroke="#d6d8dc" stroke-width="1.300" fill="none" stroke-linejoin="round" stroke-linecap="round"/><circle cx="15" cy="14.500" r="2.500" stroke="#d6d8dc" stroke-width="1.300" fill="none" stroke-linejoin="round" stroke-linecap="round"/></svg>
<svg style="left:1886px;top:289px;" width="23" height="21" viewBox="0 0 23 21"><path d="M7 1 H21 L15 8 H1 Z" stroke="#d6d8dc" stroke-width="1.300" fill="none" stroke-linejoin="round" stroke-linecap="round"/><path d="M4 11 L1 14 H15 L21 7" stroke="#d6d8dc" stroke-width="1.300" fill="none" stroke-linejoin="round" stroke-linecap="round"/><path d="M4 17 L2 19.500 H15 L21 12.500" stroke="#d6d8dc" stroke-width="1.300" fill="none" stroke-linejoin="round" stroke-linecap="round"/></svg>
<svg style="left:1891px;top:337px;" width="12" height="24" viewBox="0 0 12 24"><path d="M3 8 V17 A3 3 0 0 0 9 17 V5 A4 4 0 0 0 1 5 V18 A5 5 0 0 0 11 18 V8" stroke="#d6d8dc" stroke-width="1.300" fill="none" stroke-linejoin="round" stroke-linecap="round"/></svg>
<svg style="left:1886px;top:386px;" width="23" height="22" viewBox="0 0 23 22"><path d="M1 20 H21 V6 L9 20" stroke="#d6d8dc" stroke-width="1.300" fill="none" stroke-linejoin="round" stroke-linecap="round"/><path d="M12 17 H18 V10 Z" stroke="#d6d8dc" stroke-width="1.300" fill="none" stroke-linejoin="round" stroke-linecap="round"/><circle cx="5" cy="16" r="4" stroke="#d6d8dc" stroke-width="1.300" fill="none" stroke-linejoin="round" stroke-linecap="round"/><path d="M2 13 L9 2 A4 4 0 0 1 15 5 L9 16" stroke="#d6d8dc" stroke-width="1.300" fill="none" stroke-linejoin="round" stroke-linecap="round"/></svg>
<div style="left:1887.0px;top:436.7px;font-size:19px;line-height:19px;color:#e8e9eb;font-weight:bold;font-style:italic;font-family:'Liberation Serif',serif;">f</div>
<div style="left:1895.0px;top:442.1px;font-size:11px;line-height:11px;color:#e8e9eb;letter-spacing:0.28px;font-weight:bold;">(x)</div>
<svg style="left:1886px;top:486px;" width="24" height="23" viewBox="0 0 24 23"><rect x="1" y="1" width="10" height="5" stroke="#d6d8dc" stroke-width="1.300" fill="none" stroke-linejoin="round" stroke-linecap="round"/><path d="M5 6 V19 H10 M5 12 H10" stroke="#d6d8dc" stroke-width="1.300" fill="none" stroke-linejoin="round" stroke-linecap="round"/><rect x="10" y="9.500" width="12" height="5" stroke="#d6d8dc" stroke-width="1.300" fill="none" stroke-linejoin="round" stroke-linecap="round"/><rect x="10" y="17" width="12" height="5" stroke="#d6d8dc" stroke-width="1.300" fill="none" stroke-linejoin="round" stroke-linecap="round"/></svg>
<svg style="left:1886px;top:537px;" width="23" height="19" viewBox="0 0 23 19"><path d="M6 17 A5 5 0 0 1 5 7 A7 7 0 0 1 18 8 A4.500 4.500 0 0 1 18 17 Z" stroke="#d6d8dc" stroke-width="1.300" fill="none" stroke-linejoin="round" stroke-linecap="round"/><path d="M9 10.500 v4 M7.500 12 l1.500 -1.500 l1.500 1.500 M13.500 14.500 v-4 M12 13 l1.500 1.500 l1.500 -1.500" stroke="#d6d8dc" stroke-width="1.100" fill="none"/></svg>
<svg style="left:12px;top:1012px;" width="14" height="13" viewBox="0 0 14 13"><path d="M0.500 1.500 H13.500 M0.500 6.500 H13.500 M0.500 11.500 H13.500" stroke="#43464d" stroke-width="1.300"/></svg>
<div style="left:33px;top:1006px;width:1px;height:26px;background:#3a3d44;"></div>
<svg style="left:46px;top:1010px;" width="17" height="17" viewBox="0 0 17 17"><rect x="1" y="1.500" width="15" height="14" stroke="#8f9299" stroke-width="1.200" fill="none" stroke-linejoin="round" stroke-linecap="round"/><path d="M4 10.500 V12.500 H6" stroke="#8f9299" stroke-width="1.200" fill="none" stroke-linejoin="round" stroke-linecap="round"/></svg>
<div class="hv" style="left:68.5px;top:1012.9px;font-size:12px;line-height:12px;color:#c9cbcf;letter-spacing:0.33px;">Model</div>
<div style="left:117px;top:1005px;width:88px;height:28px;background:#2b2e33;border-left:1px solid #43464d;"></div>
<div class="hv" style="left:124.0px;top:1012.9px;font-size:12px;line-height:12px;color:#f0f0f2;letter-spacing:0.34px;">Details sheet</div>
<svg style="left:212px;top:1011px;" width="15" height="15" viewBox="0 0 15 15"><path d="M7.500 0.500 V14.500 M0.500 7.500 H14.500" stroke="#d6d8dc" stroke-width="1.300"/></svg>
<div class="hv" style="left:721.0px;top:1012.7px;font-size:12.5px;line-height:12.5px;color:#dfe0e3;letter-spacing:-0.32px;">340.4, 165.02, 0</div>
<svg style="left:822px;top:1010px;" width="18" height="18" viewBox="0 0 18 18"><circle cx="9" cy="9" r="7.800" stroke="#d0d2d6" stroke-width="1.200" fill="none" stroke-linejoin="round" stroke-linecap="round"/><ellipse cx="9" cy="9" rx="3.500" ry="7.800" stroke="#d0d2d6" stroke-width="1.200" fill="none" stroke-linejoin="round" stroke-linecap="round"/><path d="M1.500 9 H16.500 M2.500 5 H15.500 M2.500 13 H15.500" stroke="#d0d2d6" stroke-width="1.200" fill="none" stroke-linejoin="round" stroke-linecap="round"/></svg>
<div class="hv" style="left:845.0px;top:1012.9px;font-size:12px;line-height:12px;color:#dfe0e3;letter-spacing:-0.06px;">None</div>
<svg style="left:886px;top:1010px;" width="16" height="17" viewBox="0 0 16 17"><path d="M8 9 V2 M8 9 L2 14 M8 9 L14 14" stroke="#2c426b" stroke-width="1.300" fill="none"/><path d="M8 0.500 L10 4 H6 Z M0.500 15.500 L1.500 12 L4 14.500 Z M15.500 15.500 L14.500 12 L12 14.500 Z" fill="#2c426b"/></svg>
<div class="hv" style="left:908.5px;top:1013.2px;font-size:11.5px;line-height:11.5px;color:#5b5e66;letter-spacing:-0.24px;">1:1</div>
<svg style="left:936px;top:1010px;" width="18" height="17" viewBox="0 0 18 17"><path d="M1 5 V1 H5 M13 1 H17 V5 M17 12 V16 H13" stroke="#5b5e66" stroke-width="1.200" fill="none" stroke-linejoin="round" stroke-linecap="round"/><rect x="2" y="7" width="8" height="8" stroke="#5b5e66" stroke-width="1.200" fill="none" stroke-linejoin="round" stroke-linecap="round"/></svg>
<svg style="left:967px;top:1011px;" width="16" height="16" viewBox="0 0 16 16"><path d="M5 0.500 V15.500 M11 0.500 V15.500 M0.500 5 H15.500 M0.500 11 H15.500" stroke="#d0d2d6" stroke-width="1.200" fill="none" stroke-linejoin="round" stroke-linecap="round"/></svg>
<div class="hv" style="left:988.0px;top:1013.3px;font-size:11.25px;line-height:11.25px;color:#dfe0e3;letter-spacing:-0.10px;">GRID</div>
<div style="left:1022px;top:1008px;width:65px;height:22px;background:#1c2a47;border:1px solid #3a6cc0;border-radius:3px;"></div>
<svg style="left:1028px;top:1011px;" width="16" height="16" viewBox="0 0 16 16"><path d="M5 0.500 V15.500 M11 0.500 V15.500 M0.500 5 H15.500 M0.500 11 H15.500" stroke="#9a9da3" stroke-width="1.200" stroke-dasharray="2 1.200"/><rect x="3.500" y="3.500" width="3" height="3" fill="#b08060"/></svg>
<div class="hv" style="left:1050.0px;top:1012.9px;font-size:12px;line-height:12px;color:#dfe0e3;letter-spacing:-0.23px;">SNAP</div>
<svg style="left:1095px;top:1011px;" width="14" height="16" viewBox="0 0 14 16"><path d="M2 1 V15 H13" stroke="#5a9a5a" stroke-width="1.300" fill="none"/><path d="M5 6 V12 H11" stroke="#d0d2d6" stroke-width="1.200" fill="none" stroke-linejoin="round" stroke-linecap="round"/></svg>
<div class="hv" style="left:1116.0px;top:1013.0px;font-size:11.75px;line-height:11.75px;color:#dfe0e3;letter-spacing:-0.35px;">ORTHO</div>
<svg style="left:1170px;top:1011px;" width="15" height="16" viewBox="0 0 15 16"><path d="M2 13 L14 1" stroke="#d0d2d6" stroke-width="1.200" fill="none" stroke-linejoin="round" stroke-linecap="round"/><path d="M1 14.500 H8" stroke="#9a9da3" stroke-width="2"/></svg>
<div class="hv" style="left:1192.0px;top:1013.2px;font-size:11.5px;line-height:11.5px;color:#dfe0e3;letter-spacing:-0.13px;">STRACK</div>
<div style="left:1245.5px;top:1008px;width:71px;height:22px;background:#1c2a47;border:1px solid #3a6cc0;border-radius:3px;"></div>
<svg style="left:1251.5px;top:1010px;" width="16" height="18" viewBox="0 0 16 18"><path d="M1.500 16 V7.500 A6 6 0 0 1 13.500 7.500 V16 H9.500 V8 A2 2 0 0 0 5.500 8 V16 Z" fill="#8a8c92" stroke="#b8babf" stroke-width="1"/><path d="M1.500 13.500 H5.500 M9.500 13.500 H13.500" stroke="#e0e0e0" stroke-width="1.200"/></svg>
<div class="hv" style="left:1272.8px;top:1013.0px;font-size:11.75px;line-height:11.75px;color:#dfe0e3;letter-spacing:-0.20px;">ESNAP</div>
<div style="left:1319px;top:1008px;width:62.5px;height:22px;background:#1c2a47;border:1px solid #3a6cc0;border-radius:3px;"></div>
<svg style="left:1324px;top:1010px;" width="17" height="18" viewBox="0 0 17 18"><path d="M4 1 V14 H16" stroke="#d0d2d6" stroke-width="1.200" fill="none" stroke-linejoin="round" stroke-linecap="round"/><path d="M2 3 L4 0.500 L6 3 M14 12 L16.500 14 L14 16" stroke="#d0d2d6" stroke-width="1.200" fill="none" stroke-linejoin="round" stroke-linecap="round"/><path d="M10 1 L8 7 H11 L10 11" stroke="#d0d2d6" stroke-width="1.200" fill="none" stroke-linejoin="round" stroke-linecap="round"/><path d="M13.500 2 v3 M12 3.500 h3" stroke="#d0d2d6" stroke-width="1.200" fill="none" stroke-linejoin="round" stroke-linecap="round"/></svg>
<div class="hv" style="left:1346.0px;top:1013.4px;font-size:11.0px;line-height:11.0px;color:#dfe0e3;letter-spacing:-0.22px;">DUCS</div>
<div style="left:1384px;top:1008px;width:56px;height:22px;background:#1c2a47;border:1px solid #3a6cc0;border-radius:3px;"></div>
<svg style="left:1390px;top:1010px;" width="17" height="18" viewBox="0 0 17 18"><path d="M3 1 V6 M0.500 3.500 H5.500" stroke="#d0d2d6" stroke-width="1.200" fill="none" stroke-linejoin="round" stroke-linecap="round"/><rect x="3" y="10" width="13" height="5" rx="1" stroke="#d0d2d6" stroke-width="1.200" fill="none" stroke-linejoin="round" stroke-linecap="round"/><path d="M5.500 12.500 H10" stroke="#d0d2d6" stroke-width="1.200" fill="none" stroke-linejoin="round" stroke-linecap="round"/></svg>
<div class="hv" style="left:1411.6px;top:1013.3px;font-size:11.25px;line-height:11.25px;color:#dfe0e3;letter-spacing:-0.12px;">DYN</div>
<svg style="left:1446px;top:1008px;" width="20" height="20" viewBox="0 0 20 20"><path d="M3 0.500 V5.500 M0.500 3 H5.500" stroke="#d0d2d6" stroke-width="1"/><rect x="6" y="6" width="13" height="13" stroke="#d0d2d6" stroke-width="1.200" fill="none" stroke-linejoin="round" stroke-linecap="round"/><path d="M6 9.500 H19" stroke="#d0d2d6" stroke-width="1.200" fill="none" stroke-linejoin="round" stroke-linecap="round"/><path d="M9 12 h2 v2 h-2 z M13 12 h2 v2 h-2 z M9 15.500 h2 v2 h-2 z M13 15.500 h2 v2 h-2 z" fill="#d0d2d6"/></svg>
<div class="hv" style="left:1469.7px;top:1013.2px;font-size:11.5px;line-height:11.5px;color:#dfe0e3;letter-spacing:-0.31px;">QUAD</div>
<div style="left:1509px;top:1008px;width:55px;height:22px;background:#1c2a47;border:1px solid #3a6cc0;border-radius:3px;"></div>
<svg style="left:1512px;top:1007px;" width="30" height="24" viewBox="0 0 30 24"><path d="M5 0.500 V5.500 M2.500 3 H7.500" stroke="#d0d2d6" stroke-width="1"/><rect x="7" y="6" width="20" height="17" stroke="#d0d2d6" stroke-width="1.200" fill="none" stroke-linejoin="round" stroke-linecap="round"/><path d="M7 10 H27" stroke="#d0d2d6" stroke-width="1.200" fill="none" stroke-linejoin="round" stroke-linecap="round"/><path d="M11 14.500 H15 M18 14.500 H24 M11 18.500 H14 M17 18.500 H21" stroke="#d0d2d6" stroke-width="1.800"/></svg>
<div class="hv" style="left:1545.0px;top:1013.5px;font-size:10.75px;line-height:10.75px;color:#f0f0f2;letter-spacing:-1.20px;">RT</div>
<div style="left:1566.5px;top:1008px;width:58.5px;height:22px;background:#1c2a47;border:1px solid #3a6cc0;border-radius:3px;"></div>
<svg style="left:1574px;top:1011px;" width="12" height="16" viewBox="0 0 12 16"><path d="M4 11.500 C4 9.500 1 8.500 1 5.500 A5 5 0 0 1 11 5.500 C11 8.500 8 9.500 8 11.500 Z" stroke="#d0d2d6" stroke-width="1.200" fill="none" stroke-linejoin="round" stroke-linecap="round"/><path d="M4.500 14 H7.500" stroke="#d0d2d6" stroke-width="1.200" fill="none" stroke-linejoin="round" stroke-linecap="round"/><path d="M4.500 6 L6 4 L7.500 6 M6 4 V9" stroke="#d0d2d6" stroke-width="0.900" fill="none"/></svg>
<div class="hv" style="left:1593.8px;top:1013.3px;font-size:11.25px;line-height:11.25px;color:#dfe0e3;letter-spacing:-0.19px;">HIDE</div>
<svg style="left:1632px;top:1013px;" width="18" height="12" viewBox="0 0 18 12"><rect x="0.600" y="0.600" width="16.800" height="10.800" rx="1.500" stroke="#d0d2d6" stroke-width="1.200" fill="none" stroke-linejoin="round" stroke-linecap="round"/></svg>
<div style="left:1635.0px;top:1016.7px;font-size:4.75px;line-height:4.75px;color:#d0d2d6;letter-spacing:-0.43px;font-weight:bold;">CTRL</div>
<div class="hv" style="left:1654.7px;top:1012.9px;font-size:12px;line-height:12px;color:#dfe0e3;letter-spacing:-0.19px;">HKA</div>
<svg style="left:1691px;top:1010px;" width="19" height="18" viewBox="0 0 19 18"><rect x="1" y="1" width="15" height="5" stroke="#d0d2d6" stroke-width="1.200" fill="none" stroke-linejoin="round" stroke-linecap="round"/><path d="M1 6 V16 H9 M6 6 V16 M16 6 V9" stroke="#d0d2d6" stroke-width="1.200" fill="none" stroke-linejoin="round" stroke-linecap="round"/><rect x="10.500" y="12" width="7" height="5" stroke="#d0d2d6" stroke-width="1.200" fill="none" stroke-linejoin="round" stroke-linecap="round"/><path d="M12 12 V10.500 A2 2 0 0 1 16 10.500 V12" stroke="#d0d2d6" stroke-width="1.200" fill="none" stroke-linejoin="round" stroke-linecap="round"/><path d="M3.500 3.500 h0.500 M6 3.500 h0.500 M8.500 3.500 h0.500" stroke="#d0d2d6" stroke-width="1.200"/></svg>
<svg style="left:1721px;top:1010px;" width="17" height="18" viewBox="0 0 17 18"><rect x="1" y="1" width="15" height="15.500" rx="1" stroke="#d0d2d6" stroke-width="1.200" fill="none" stroke-linejoin="round" stroke-linecap="round"/><path d="M1 6 H16 M6 6 V16.500" stroke="#d0d2d6" stroke-width="1.200" fill="none" stroke-linejoin="round" stroke-linecap="round"/><path d="M3.500 3.500 h0.500 M6 3.500 h0.500 M8.500 3.500 h0.500" stroke="#d0d2d6" stroke-width="1.200"/></svg>
<div style="left:1741.0px;top:1011.5px;font-size:14.25px;line-height:14.25px;color:#eceded;letter-spacing:-0.23px;">Modeling</div>
<svg style="left:1806px;top:1016px;" width="8" height="6" viewBox="0 0 8 6"><path d="M0.500 0.500 L4 4.500 L7.500 0.500" stroke="#8a8d93" stroke-width="1.200" fill="none"/></svg>
<svg style="left:1833px;top:1010px;" width="20" height="18" viewBox="0 0 20 18"><path d="M5 5 V1 H15 V5" stroke="#d0d2d6" stroke-width="1.200" fill="none" stroke-linejoin="round" stroke-linecap="round"/><path d="M5 12.500 H1 V5 H19 V12.500 H15" stroke="#d0d2d6" stroke-width="1.200" fill="none" stroke-linejoin="round" stroke-linecap="round"/><rect x="5" y="10" width="10" height="7" fill="#1a1c20" stroke="#d0d2d6" stroke-width="1.200" fill="none" stroke-linejoin="round" stroke-linecap="round"/><rect x="5.500" y="13.500" width="9" height="3.500" fill="#4d8fe8"/></svg>
<svg style="left:1865px;top:1010px;" width="14" height="17" viewBox="0 0 14 17"><path d="M1 12.500 H13 L11.500 10.500 V6.500 A4.500 4.500 0 0 0 2.500 6.500 V10.500 Z" stroke="#5b5e66" stroke-width="1.200" fill="none" stroke-linejoin="round" stroke-linecap="round"/><path d="M5.500 14.500 A1.600 1.600 0 0 0 8.500 14.500" stroke="#5b5e66" stroke-width="1.200" fill="none" stroke-linejoin="round" stroke-linecap="round"/></svg>
<svg style="left:1898.5px;top:1007px;" width="4" height="22" viewBox="0 0 4 22"><circle cx="2" cy="3" r="1.700" fill="#f0f0f2"/><circle cx="2" cy="11" r="1.700" fill="#f0f0f2"/><circle cx="2" cy="19" r="1.700" fill="#f0f0f2"/></svg>
<div style="left:784px;top:1035.5px;width:55px;height:1px;background:#4a4d54;"></div>
<div style="left:1918px;top:0px;width:2px;height:1036px;background:#1d4a1d;"></div>
<div style="left:0px;top:0px;width:1px;height:1036px;background:#3b7d3b;"></div>
<div style="left:1px;top:0px;width:1px;height:1036px;background:rgba(50,110,50,0.4);"></div>
</div>
</body>
</html>
